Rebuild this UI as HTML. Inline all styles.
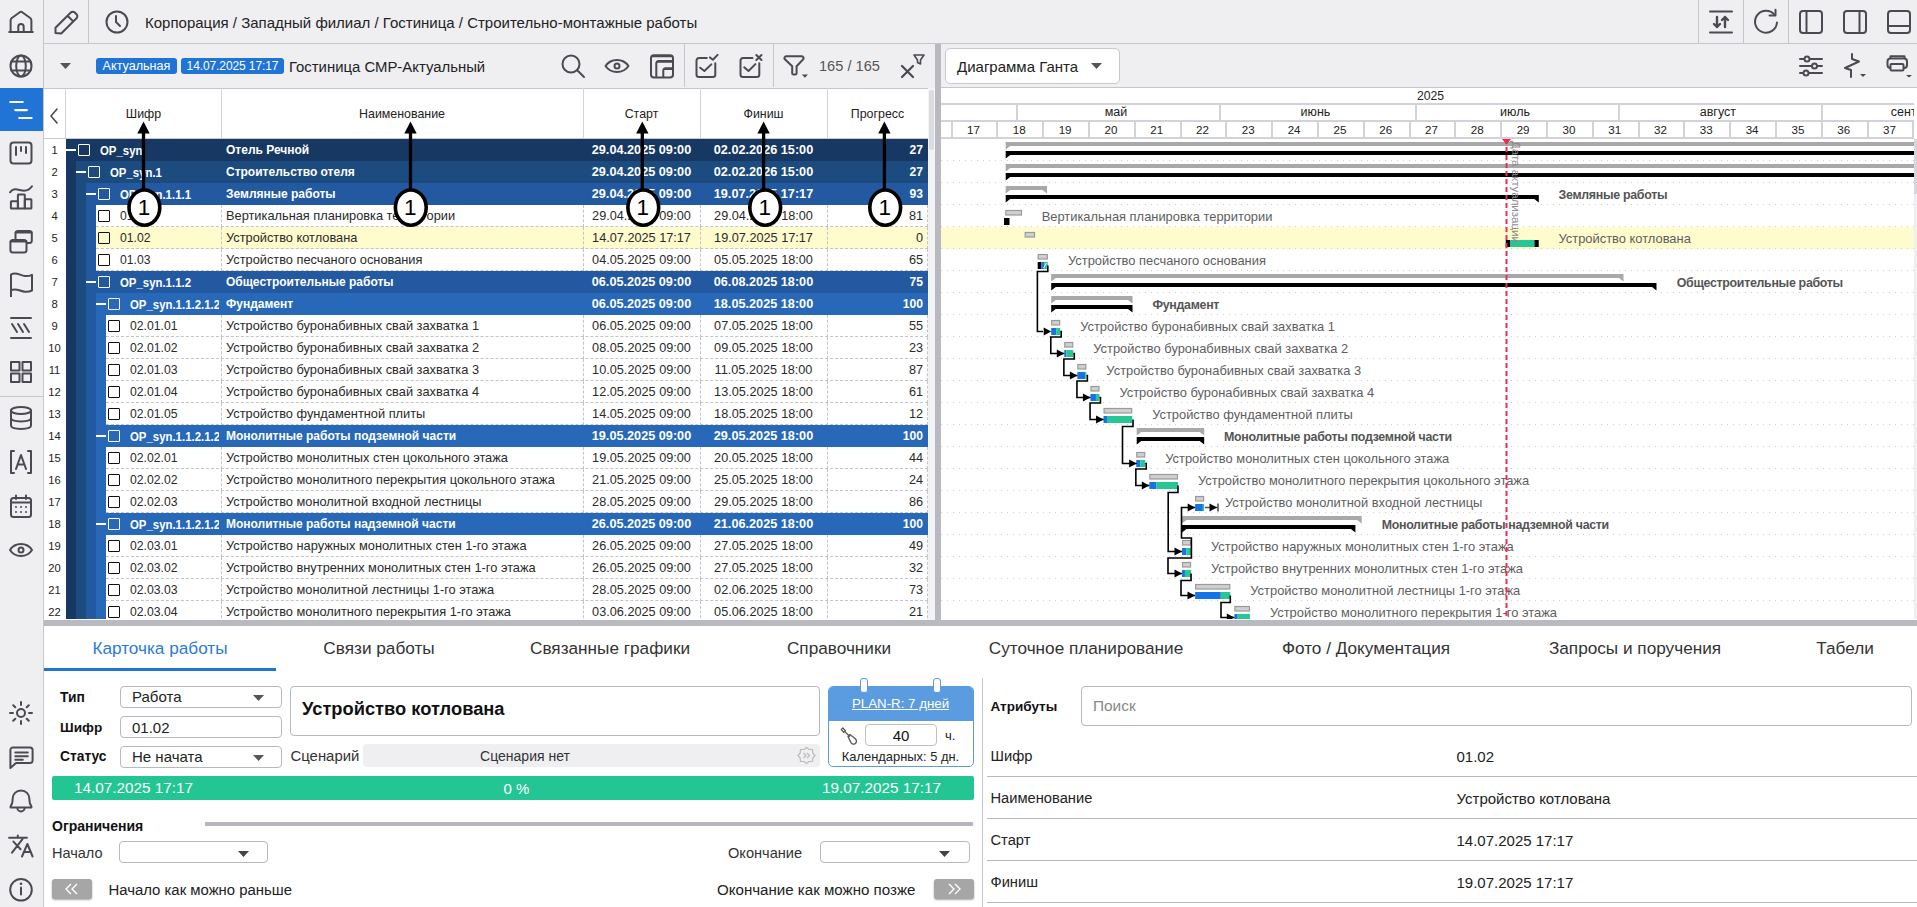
<!DOCTYPE html><html><head><meta charset="utf-8"><style>
html,body{margin:0;padding:0;width:1917px;height:907px;overflow:hidden;background:#fff;font-family:"Liberation Sans", sans-serif;}
div,svg{box-sizing:border-box;}
</style></head><body><div style="position:absolute;left:0px;top:0px;width:1917px;height:88px;background:#efeff2;"></div><div style="position:absolute;left:0px;top:0px;width:43px;height:907px;background:#efeff2;"></div><div style="position:absolute;left:43px;top:0px;width:1px;height:907px;background:#c6c6cc;"></div><div style="position:absolute;left:44px;top:43px;width:1873px;height:1px;background:#c6c6cc;"></div><div style="position:absolute;left:44px;top:88px;width:1873px;height:1px;background:#c6c6cc;"></div><div style="position:absolute;left:88px;top:0px;width:1px;height:43px;background:#c6c6cc;"></div><div style="position:absolute;left:1698px;top:0px;width:1px;height:43px;background:#c6c6cc;"></div><div style="position:absolute;left:1743px;top:0px;width:1px;height:43px;background:#c6c6cc;"></div><div style="position:absolute;left:1788px;top:0px;width:1px;height:43px;background:#c6c6cc;"></div><div style="position:absolute;left:684px;top:44px;width:1px;height:43px;background:#c6c6cc;"></div><div style="position:absolute;left:773px;top:44px;width:1px;height:43px;background:#c6c6cc;"></div><div style="position:absolute;left:0px;top:88px;width:43px;height:43px;background:#1f74d6;"></div><svg style="position:absolute;left:8px;top:9px;" width="26" height="26" viewBox="0 0 26 26"><g fill="none" stroke="#4a4a52" stroke-width="2" stroke-linecap="round" stroke-linejoin="round" stroke-width="2"><path d="M1.2 22.9 H24.8 M2.6 22.9 V11.5 Q2.6 10 3.8 9 L11.8 3.2 Q13 2.4 14.2 3.2 L22.2 9 Q23.4 10 23.4 11.5 V22.9 M10.3 22.9 V17.8 a2.7 2.7 0 0 1 5.4 0 V22.9"/></g></svg><svg style="position:absolute;left:8.0px;top:53.0px;" width="26" height="26" viewBox="0 0 26 26"><g fill="none" stroke="#4a4a52" stroke-width="2" stroke-linecap="round" stroke-linejoin="round"><circle cx="13" cy="13" r="10.5"/><ellipse cx="13" cy="13" rx="4.8" ry="10.5"/><path d="M3.3 8.5H22.7M3.3 17.5H22.7"/></g></svg><svg style="position:absolute;left:8.0px;top:97.0px;" width="26" height="26" viewBox="0 0 26 26"><g fill="none" stroke="#fff" stroke-width="2.2" stroke-linecap="round"><path d="M2.3 5H14.7M7.2 13.1H18.9M11.3 21H23.6"/></g></svg><svg style="position:absolute;left:8.0px;top:140.0px;" width="26" height="26" viewBox="0 0 26 26"><g fill="none" stroke="#4a4a52" stroke-width="2" stroke-linecap="round" stroke-linejoin="round"><rect x="2.5" y="2.5" width="21" height="21" rx="3"/><path d="M8 7V15M13 7V11M18 7V13"/></g></svg><svg style="position:absolute;left:8px;top:184px;" width="26" height="26" viewBox="0 0 26 26"><g fill="none" stroke="#4a4a52" stroke-width="2" stroke-linecap="round" stroke-linejoin="round" stroke-width="2"><path d="M2 8.3 C5.5 3.5 9.5 5.5 13 6.3 C17 7.2 21 6.5 24 2.2"/><rect x="2.9" y="17.3" width="7" height="7.1" rx="0.5"/><rect x="9.9" y="10.6" width="6.9" height="13.8" rx="0.5"/><rect x="16.8" y="15.2" width="6.6" height="9.2" rx="0.5"/></g></svg><svg style="position:absolute;left:8px;top:228px;" width="26" height="26" viewBox="0 0 26 26"><g fill="none" stroke="#4a4a52" stroke-width="2" stroke-linecap="round" stroke-linejoin="round" stroke-width="2"><rect x="7.5" y="3" width="16.3" height="12" rx="2.5"/><path d="M8 4.2H23.3" stroke-width="2.4"/><rect x="2.4" y="12" width="16.1" height="12.5" rx="2.5" fill="#efeff2"/><path d="M3 13.2H18" stroke-width="2.4"/></g></svg><svg style="position:absolute;left:8px;top:271px;" width="26" height="26" viewBox="0 0 26 26"><g fill="none" stroke="#4a4a52" stroke-width="2" stroke-linecap="round" stroke-linejoin="round" stroke-width="2"><path d="M3 25.5 V3.5 C8 0.5 12 4.5 17 5 C20 5.3 22.5 4.5 24 3.8 V19.5 C22.5 20.3 20 21 17 20.8 C12 20.3 8 16.5 3 19.2"/></g></svg><svg style="position:absolute;left:8.0px;top:315.0px;" width="26" height="26" viewBox="0 0 26 26"><g fill="none" stroke="#4a4a52" stroke-width="2" stroke-linecap="round" stroke-linejoin="round"><path d="M3 3H23M3 23H23M4 9L9 17M10 9L15 17M16 9L21 17"/></g></svg><svg style="position:absolute;left:8.0px;top:359.0px;" width="26" height="26" viewBox="0 0 26 26"><g fill="none" stroke="#4a4a52" stroke-width="2" stroke-linecap="round" stroke-linejoin="round"><rect x="3" y="3" width="8.5" height="8.5"/><rect x="14.5" y="3" width="8.5" height="8.5"/><rect x="3" y="14.5" width="8.5" height="8.5"/><rect x="14.5" y="14.5" width="8.5" height="8.5"/></g></svg><div style="position:absolute;left:0px;top:396px;width:43px;height:1px;background:#c6c6cc;"></div><svg style="position:absolute;left:8.0px;top:405.0px;" width="26" height="26" viewBox="0 0 26 26"><g fill="none" stroke="#4a4a52" stroke-width="2" stroke-linecap="round" stroke-linejoin="round"><ellipse cx="13" cy="5.5" rx="10" ry="3.5"/><path d="M3 5.5V20.5 C3 25 23 25 23 20.5V5.5M3 13 C3 17.5 23 17.5 23 13"/></g></svg><svg style="position:absolute;left:8.0px;top:449.0px;" width="26" height="26" viewBox="0 0 26 26"><g fill="none" stroke="#4a4a52" stroke-width="2" stroke-linecap="round" stroke-linejoin="round"><path d="M6 2H3V24H6M20 2H23V24H20M8 20L13 6L18 20M9.5 15.5H16.5"/></g></svg><svg style="position:absolute;left:8.0px;top:493.0px;" width="26" height="26" viewBox="0 0 26 26"><g fill="none" stroke="#4a4a52" stroke-width="2" stroke-linecap="round" stroke-linejoin="round"><rect x="3" y="5" width="20" height="19" rx="2.5"/><path d="M3 9.5H23M8 2.5V6M18 2.5V6"/></g><g fill="#4a4a52"><circle cx="8" cy="14" r="1"/><circle cx="13" cy="14" r="1"/><circle cx="18" cy="14" r="1"/><circle cx="8" cy="19" r="1"/><circle cx="13" cy="19" r="1"/><circle cx="18" cy="19" r="1"/></g></svg><svg style="position:absolute;left:8.0px;top:537.0px;" width="26" height="26" viewBox="0 0 26 26"><g fill="none" stroke="#4a4a52" stroke-width="2" stroke-linecap="round" stroke-linejoin="round"><path d="M2 13 C7 5 19 5 24 13 C19 21 7 21 2 13Z"/><circle cx="13" cy="13" r="2.5"/></g></svg><svg style="position:absolute;left:8.0px;top:700.0px;" width="26" height="26" viewBox="0 0 26 26"><g fill="none" stroke="#4a4a52" stroke-width="2" stroke-linecap="round" stroke-linejoin="round"><circle cx="13" cy="13" r="4"/><path d="M13 2V5M13 21V24M2 13H5M21 13H24M5.2 5.2L7.3 7.3M18.7 18.7L20.8 20.8M5.2 20.8L7.3 18.7M18.7 7.3L20.8 5.2"/></g></svg><svg style="position:absolute;left:8px;top:744px;" width="26" height="26" viewBox="0 0 26 26"><g fill="none" stroke="#4a4a52" stroke-width="2" stroke-linecap="round" stroke-linejoin="round" stroke-width="2"><path d="M2.4 6 a2.6 2.6 0 0 1 2.6 -2.6 H22 a2.6 2.6 0 0 1 2.6 2.6 V16.5 a2.6 2.6 0 0 1 -2.6 2.6 H8 L2.4 24Z"/><path d="M7.3 8.6H19.8M7.3 12.2H19.8M7.3 15.8H14.8"/></g></svg><svg style="position:absolute;left:8px;top:788px;" width="26" height="26" viewBox="0 0 26 26"><g fill="none" stroke="#4a4a52" stroke-width="2" stroke-linecap="round" stroke-linejoin="round" stroke-width="2"><path d="M3.2 19.5 Q2.2 19.5 2.6 18.3 Q4.6 15.5 4.6 12 V11 C4.6 5.8 8.2 2.6 13 2.6 C17.8 2.6 21.4 5.8 21.4 11 V12 Q21.4 15.5 23.4 18.3 Q23.8 19.5 22.8 19.5 Z M9.3 19.8 a3.7 3.7 0 0 0 7.4 0"/></g></svg><svg style="position:absolute;left:7px;top:831px;" width="28" height="28" viewBox="0 0 28 28"><g fill="none" stroke="#4a4a52" stroke-width="2" stroke-linecap="round" stroke-linejoin="round" stroke-width="2"><path d="M2.1 6.8H19.9M10.8 4.4V6.8M6.4 10.6L13.6 18.3M15.5 8.2L5 21.6M15 25.5L20.4 13L25.6 25.5M16.8 21H24"/></g></svg><svg style="position:absolute;left:8.0px;top:876.0px;" width="26" height="26" viewBox="0 0 26 26"><g fill="none" stroke="#4a4a52" stroke-width="2" stroke-linecap="round" stroke-linejoin="round"><circle cx="13" cy="13.8" r="10.8"/><path d="M13 11.5V18.5"/></g><circle cx="13" cy="7.8" r="1.3" fill="#4a4a52"/></svg><svg style="position:absolute;left:53.0px;top:9.0px;" width="26" height="26" viewBox="0 0 26 26"><g fill="none" stroke="#4a4a52" stroke-width="2" stroke-linecap="round" stroke-linejoin="round" stroke-width="2.1"><path d="M2.5 24 L2.5 18.8 L17.8 3.5 a2.8 2.8 0 0 1 4 0 L23.5 5.2 a2.8 2.8 0 0 1 0 4 L8.2 24.5Z M14.8 7 L20.2 12.4"/></g></svg><svg style="position:absolute;left:104.0px;top:9.0px;" width="26" height="26" viewBox="0 0 26 26"><g fill="none" stroke="#4a4a52" stroke-width="2" stroke-linecap="round" stroke-linejoin="round"><circle cx="13" cy="13" r="10.5"/><path d="M12 7V13L16 17"/></g></svg><div style="position:absolute;left:145px;top:11.5px;height:21px;line-height:21px;font-size:15px;color:#222;white-space:nowrap;">Корпорация / Западный филиал / Гостиница / Строительно-монтажные работы</div><svg style="position:absolute;left:1708.0px;top:9.0px;" width="26" height="26" viewBox="0 0 26 26"><g fill="none" stroke="#4a4a52" stroke-width="2" stroke-linecap="round" stroke-linejoin="round"><path d="M2 2.5H24M2 23.5H24"/><path d="M9 8V18M6 15L9 18L12 15M17 18V8M14 11L17 8L20 11" stroke-width="2.4"/></g></svg><svg style="position:absolute;left:1752px;top:8px;" width="28" height="28" viewBox="0 0 28 28"><g fill="none" stroke="#4a4a52" stroke-width="2" stroke-linecap="round" stroke-linejoin="round" stroke-width="2.1"><path d="M25 14.5 A11 11 0 1 1 22.2 6.3"/><path d="M23.5 1.8 V7.6 H17.5"/></g></svg><svg style="position:absolute;left:1798.0px;top:9.0px;" width="26" height="26" viewBox="0 0 26 26"><g fill="none" stroke="#4a4a52" stroke-width="2" stroke-linecap="round" stroke-linejoin="round"><rect x="2" y="2" width="22" height="22" rx="3"/><path d="M8.5 2V24"/></g></svg><svg style="position:absolute;left:1842.0px;top:9.0px;" width="26" height="26" viewBox="0 0 26 26"><g fill="none" stroke="#4a4a52" stroke-width="2" stroke-linecap="round" stroke-linejoin="round"><rect x="2" y="2" width="22" height="22" rx="3"/><path d="M17.5 2V24"/></g></svg><svg style="position:absolute;left:1886.0px;top:9.0px;" width="26" height="26" viewBox="0 0 26 26"><g fill="none" stroke="#4a4a52" stroke-width="2" stroke-linecap="round" stroke-linejoin="round"><rect x="2" y="2" width="22" height="22" rx="3"/><path d="M2 17H24"/></g></svg><svg style="position:absolute;left:60px;top:63px;" width="12" height="7" viewBox="0 0 12 7"><path d="M0 0H11L5.5 6Z" fill="#555"/></svg><div style="position:absolute;left:96px;top:58px;width:81px;height:16px;border-radius:3px;background:#1f74d6;color:#fff;font-size:12.6px;line-height:16px;text-align:center;">Актуальная</div><div style="position:absolute;left:181px;top:58px;width:103px;height:16px;border-radius:3px;background:#1f74d6;color:#fff;font-size:12.6px;line-height:16px;text-align:center;letter-spacing:-0.1px;font-size:12px;">14.07.2025 17:17</div><div style="position:absolute;left:289px;top:56.55px;height:20.9px;line-height:20.9px;font-size:14.9px;color:#222;white-space:nowrap;">Гостиница СМР-Актуальный</div><svg style="position:absolute;left:560.0px;top:53.0px;" width="26" height="26" viewBox="0 0 26 26"><g fill="none" stroke="#4a4a52" stroke-width="2" stroke-linecap="round" stroke-linejoin="round"><circle cx="11" cy="11" r="8.5"/><path d="M17.5 17.5L24 24"/></g></svg><svg style="position:absolute;left:604.0px;top:53.0px;" width="26" height="26" viewBox="0 0 26 26"><g fill="none" stroke="#4a4a52" stroke-width="2" stroke-linecap="round" stroke-linejoin="round"><path d="M1.5 13 C7 5 19 5 24.5 13 C19 21 7 21 1.5 13Z"/><circle cx="13" cy="13" r="2.5"/></g></svg><svg style="position:absolute;left:648.0px;top:53.0px;" width="26" height="26" viewBox="0 0 26 26"><g fill="none" stroke="#4a4a52" stroke-width="2" stroke-linecap="round" stroke-linejoin="round" stroke-width="2.1"><rect x="3" y="2.2" width="22" height="22.3" rx="3"/><path d="M8.3 24V10.5 a2.5 2.5 0 0 1 2.5 -2.5H24.5M15.3 24V17.3 a2 2 0 0 1 2 -2H24.5"/><path d="M4 3.4H24M9.5 9H24M16.5 16.2H24" stroke-width="1.6"/></g></svg><svg style="position:absolute;left:693px;top:53px;" width="26" height="26" viewBox="0 0 26 26"><g fill="none" stroke="#4a4a52" stroke-width="2" stroke-linecap="round" stroke-linejoin="round" stroke-width="2.1"><path d="M13.8 5H6 a2.5 2.5 0 0 0 -2.5 2.5V21.5 a2.5 2.5 0 0 0 2.5 2.5H19.8 a2.5 2.5 0 0 0 2.5 -2.5V10.3"/><path d="M7.2 14.7L11.4 18L18.3 11.4M17 4.4L19.9 6.8L24.6 1.9"/></g></svg><svg style="position:absolute;left:737px;top:53px;" width="26" height="26" viewBox="0 0 26 26"><g fill="none" stroke="#4a4a52" stroke-width="2" stroke-linecap="round" stroke-linejoin="round" stroke-width="2.1"><path d="M15.5 5H6 a2.5 2.5 0 0 0 -2.5 2.5V21.5 a2.5 2.5 0 0 0 2.5 2.5H19.8 a2.5 2.5 0 0 0 2.5 -2.5V10.3"/><path d="M7.2 14.3L11.5 18L18.4 11.1M19.3 2L24.5 7M24.5 2L19.3 7"/></g></svg><svg style="position:absolute;left:783px;top:53px;" width="26" height="26" viewBox="0 0 26 26"><g fill="none" stroke="#4a4a52" stroke-width="2" stroke-linecap="round" stroke-linejoin="round" stroke-width="2.1"><path d="M3.2 3.3H18.8a1.8 1.8 0 0 1 1.3 3L13.6 13.3V20.2a1.4 1.4 0 0 1 -1.4 1.4H10.6a1.4 1.4 0 0 1 -1.4 -1.4V13.3L1.9 6.3a1.8 1.8 0 0 1 1.3 -3Z"/></g><path d="M18.8 21.4H25L21.9 24.8Z" fill="#4a4a52"/></svg><div style="position:absolute;left:819px;top:55.7px;height:20.6px;line-height:20.6px;font-size:14.6px;color:#555;white-space:nowrap;">165 / 165</div><svg style="position:absolute;left:899.0px;top:53.0px;" width="26" height="26" viewBox="0 0 26 26"><g fill="none" stroke="#4a4a52" stroke-width="2" stroke-linecap="round" stroke-linejoin="round"><path d="M3 13L14 24M14 13L3 24" stroke-width="2.2"/><path d="M15 2H25L21.5 7V11L18.5 9.5V7Z" stroke-width="1.6"/></g></svg><div style="position:absolute;left:945px;top:48px;width:175px;height:36px;border:1px solid #c8c8d0;border-radius:5px;background:#fff;"></div><div style="position:absolute;left:957px;top:55.5px;height:21px;line-height:21px;font-size:15px;color:#222;white-space:nowrap;">Диаграмма Ганта</div><svg style="position:absolute;left:1091px;top:63px;" width="12" height="7" viewBox="0 0 12 7"><path d="M0 0H11L5.5 6Z" fill="#555"/></svg><svg style="position:absolute;left:1798.0px;top:53.0px;" width="26" height="26" viewBox="0 0 26 26"><g fill="none" stroke="#4a4a52" stroke-width="2" stroke-linecap="round" stroke-linejoin="round"><path d="M2 6H24M2 13H24M2 20H24"/><circle cx="9" cy="6" r="2.5" fill="#efeff2"/><circle cx="16.5" cy="13" r="2.5" fill="#efeff2"/><circle cx="8" cy="20" r="2.5" fill="#efeff2"/></g></svg><svg style="position:absolute;left:1842.0px;top:53.0px;" width="26" height="26" viewBox="0 0 26 26"><g fill="none" stroke="#4a4a52" stroke-width="2" stroke-linecap="round" stroke-linejoin="round"><path d="M10 1V6L17 8.5L3 15L9 17V24"/></g><path d="M18 21H24L21 24Z" fill="#4a4a52"/></svg><svg style="position:absolute;left:1885px;top:52px;" width="28" height="28" viewBox="0 0 28 28"><g fill="none" stroke="#4a4a52" stroke-width="2" stroke-linecap="round" stroke-linejoin="round" stroke-width="2.1"><path d="M5.5 6V4.2H19.5V6"/><rect x="2.5" y="6.5" width="19.5" height="9.5" rx="3"/><rect x="5.5" y="12" width="13" height="6.5" rx="1" fill="#efeff2"/></g><path d="M21 23H27L24 25.5Z" fill="#4a4a52"/></svg><div style="position:absolute;left:44px;top:89px;width:884px;height:50px;background:#fff;"></div><div style="position:absolute;left:44px;top:138px;width:884px;height:1px;background:#c8c8ce;"></div><div style="position:absolute;left:65px;top:88px;width:1px;height:50px;background:#d4d4da;"></div><div style="position:absolute;left:221px;top:88px;width:1px;height:50px;background:#d4d4da;"></div><div style="position:absolute;left:583px;top:88px;width:1px;height:50px;background:#d4d4da;"></div><div style="position:absolute;left:700px;top:88px;width:1px;height:50px;background:#d4d4da;"></div><div style="position:absolute;left:827px;top:88px;width:1px;height:50px;background:#d4d4da;"></div><svg style="position:absolute;left:49px;top:108px;" width="10" height="16" viewBox="0 0 10 16"><path d="M8 1L2 8L8 15" fill="none" stroke="#4a4a52" stroke-width="1.6" stroke-linecap="round" stroke-linejoin="round"/></svg><div style="position:absolute;left:-56.5px;top:105.0px;width:400px;height:18.4px;line-height:18.4px;text-align:center;font-size:12.4px;color:#222;white-space:nowrap;">Шифр</div><div style="position:absolute;left:202.0px;top:105.0px;width:400px;height:18.4px;line-height:18.4px;text-align:center;font-size:12.4px;color:#222;white-space:nowrap;">Наименование</div><div style="position:absolute;left:441.5px;top:105.0px;width:400px;height:18.4px;line-height:18.4px;text-align:center;font-size:12.4px;color:#222;white-space:nowrap;">Старт</div><div style="position:absolute;left:563.5px;top:105.0px;width:400px;height:18.4px;line-height:18.4px;text-align:center;font-size:12.4px;color:#222;white-space:nowrap;">Финиш</div><div style="position:absolute;left:677.5px;top:105.0px;width:400px;height:18.4px;line-height:18.4px;text-align:center;font-size:12.4px;color:#222;white-space:nowrap;">Прогресс</div><div style="position:absolute;left:44px;top:139px;width:884px;height:482px;background:#fff;"></div><div style="position:absolute;left:928px;top:88px;width:7px;height:533px;background:#f4f4f6;"></div><div style="position:absolute;left:929px;top:90px;width:5px;height:60px;background:#dcdce0;border-radius:3px;"></div><div style="position:absolute;left:935px;top:44px;width:6px;height:577px;background:#b9b9c0;"></div><div style="position:absolute;left:66px;top:139px;width:862px;height:22px;background:#173863;"></div><div style="position:absolute;left:66px;top:149px;width:10px;height:2px;background:#fff;"></div><div style="position:absolute;left:78px;top:144px;width:12px;height:12px;border:1.5px solid #fff;border-radius:1px;"></div><div style="position:absolute;left:100px;top:139.5px;width:119px;height:22px;overflow:hidden;line-height:22px;font-size:12.4px;font-weight:bold;color:#fff;white-space:nowrap;"><span style="display:inline-block;transform:scaleX(0.92);transform-origin:0 50%;">OP_syn</span></div><div style="position:absolute;left:226px;top:141.0px;height:18px;line-height:18px;font-size:12px;color:#fff;font-weight:bold;white-space:nowrap;">Отель Речной</div><div style="position:absolute;left:441.5px;top:140.65px;width:400px;height:18.7px;line-height:18.7px;text-align:center;font-size:12.7px;color:#fff;font-weight:bold;white-space:nowrap;">29.04.2025 09:00</div><div style="position:absolute;left:563.5px;top:140.65px;width:400px;height:18.7px;line-height:18.7px;text-align:center;font-size:12.7px;color:#fff;font-weight:bold;white-space:nowrap;">02.02.2026 15:00</div><div style="position:absolute;left:623px;top:140.95px;width:300px;height:18.1px;line-height:18.1px;text-align:right;font-size:12.1px;color:#fff;font-weight:bold;white-space:nowrap;">27</div><div style="position:absolute;left:39.5px;top:142.20000000000002px;width:30px;height:17.2px;line-height:17.2px;text-align:center;font-size:11.2px;color:#222;white-space:nowrap;">1</div><div style="position:absolute;left:66px;top:161px;width:10px;height:22px;background:#173863;"></div><div style="position:absolute;left:76px;top:161px;width:852px;height:22px;background:#1c4b80;"></div><div style="position:absolute;left:76px;top:171px;width:10px;height:2px;background:#fff;"></div><div style="position:absolute;left:88px;top:166px;width:12px;height:12px;border:1.5px solid #fff;border-radius:1px;"></div><div style="position:absolute;left:110px;top:161.5px;width:109px;height:22px;overflow:hidden;line-height:22px;font-size:12.4px;font-weight:bold;color:#fff;white-space:nowrap;"><span style="display:inline-block;transform:scaleX(0.92);transform-origin:0 50%;">OP_syn.1</span></div><div style="position:absolute;left:226px;top:163.0px;height:18px;line-height:18px;font-size:12px;color:#fff;font-weight:bold;white-space:nowrap;">Строительство отеля</div><div style="position:absolute;left:441.5px;top:162.65px;width:400px;height:18.7px;line-height:18.7px;text-align:center;font-size:12.7px;color:#fff;font-weight:bold;white-space:nowrap;">29.04.2025 09:00</div><div style="position:absolute;left:563.5px;top:162.65px;width:400px;height:18.7px;line-height:18.7px;text-align:center;font-size:12.7px;color:#fff;font-weight:bold;white-space:nowrap;">02.02.2026 15:00</div><div style="position:absolute;left:623px;top:162.95px;width:300px;height:18.1px;line-height:18.1px;text-align:right;font-size:12.1px;color:#fff;font-weight:bold;white-space:nowrap;">27</div><div style="position:absolute;left:39.5px;top:164.20000000000002px;width:30px;height:17.2px;line-height:17.2px;text-align:center;font-size:11.2px;color:#222;white-space:nowrap;">2</div><div style="position:absolute;left:66px;top:183px;width:10px;height:22px;background:#173863;"></div><div style="position:absolute;left:76px;top:183px;width:10px;height:22px;background:#1c4b80;"></div><div style="position:absolute;left:86px;top:183px;width:842px;height:22px;background:#2259a0;"></div><div style="position:absolute;left:86px;top:193px;width:10px;height:2px;background:#fff;"></div><div style="position:absolute;left:98px;top:188px;width:12px;height:12px;border:1.5px solid #fff;border-radius:1px;"></div><div style="position:absolute;left:120px;top:183.5px;width:99px;height:22px;overflow:hidden;line-height:22px;font-size:12.4px;font-weight:bold;color:#fff;white-space:nowrap;"><span style="display:inline-block;transform:scaleX(0.92);transform-origin:0 50%;">OP_syn.1.1.1</span></div><div style="position:absolute;left:226px;top:185.0px;height:18px;line-height:18px;font-size:12px;color:#fff;font-weight:bold;white-space:nowrap;">Земляные работы</div><div style="position:absolute;left:441.5px;top:184.65px;width:400px;height:18.7px;line-height:18.7px;text-align:center;font-size:12.7px;color:#fff;font-weight:bold;white-space:nowrap;">29.04.2025 09:00</div><div style="position:absolute;left:563.5px;top:184.65px;width:400px;height:18.7px;line-height:18.7px;text-align:center;font-size:12.7px;color:#fff;font-weight:bold;white-space:nowrap;">19.07.2025 17:17</div><div style="position:absolute;left:623px;top:184.95px;width:300px;height:18.1px;line-height:18.1px;text-align:right;font-size:12.1px;color:#fff;font-weight:bold;white-space:nowrap;">93</div><div style="position:absolute;left:39.5px;top:186.20000000000002px;width:30px;height:17.2px;line-height:17.2px;text-align:center;font-size:11.2px;color:#222;white-space:nowrap;">3</div><div style="position:absolute;left:66px;top:205px;width:10px;height:22px;background:#173863;"></div><div style="position:absolute;left:76px;top:205px;width:10px;height:22px;background:#1c4b80;"></div><div style="position:absolute;left:86px;top:205px;width:10px;height:22px;background:#2259a0;"></div><div style="position:absolute;left:96px;top:205px;width:832px;height:22px;background:#fff;border-bottom:1px dashed #c4c4c8;"></div><div style="position:absolute;left:221px;top:205px;width:1px;height:22px;border-left:1px dashed #c4c4c8;"></div><div style="position:absolute;left:583px;top:205px;width:1px;height:22px;border-left:1px dashed #c4c4c8;"></div><div style="position:absolute;left:700px;top:205px;width:1px;height:22px;border-left:1px dashed #c4c4c8;"></div><div style="position:absolute;left:827px;top:205px;width:1px;height:22px;border-left:1px dashed #c4c4c8;"></div><div style="position:absolute;left:927px;top:205px;width:1px;height:22px;border-left:1px dashed #c4c4c8;"></div><div style="position:absolute;left:98px;top:210px;width:12px;height:12px;border:1.5px solid #111;border-radius:1px;"></div><div style="position:absolute;left:120px;top:206.9px;height:18.2px;line-height:18.2px;font-size:12.2px;color:#2a2a2a;white-space:nowrap;">01.01</div><div style="position:absolute;left:226px;top:206.6px;height:18.8px;line-height:18.8px;font-size:12.8px;color:#2a2a2a;white-space:nowrap;">Вертикальная планировка территории</div><div style="position:absolute;left:441.5px;top:206.65px;width:400px;height:18.7px;line-height:18.7px;text-align:center;font-size:12.7px;color:#2a2a2a;white-space:nowrap;">29.04.2025 09:00</div><div style="position:absolute;left:563.5px;top:206.65px;width:400px;height:18.7px;line-height:18.7px;text-align:center;font-size:12.7px;color:#2a2a2a;white-space:nowrap;">29.04.2025 18:00</div><div style="position:absolute;left:623px;top:206.65px;width:300px;height:18.7px;line-height:18.7px;text-align:right;font-size:12.7px;color:#2a2a2a;white-space:nowrap;">81</div><div style="position:absolute;left:39.5px;top:208.20000000000002px;width:30px;height:17.2px;line-height:17.2px;text-align:center;font-size:11.2px;color:#222;white-space:nowrap;">4</div><div style="position:absolute;left:66px;top:227px;width:10px;height:22px;background:#173863;"></div><div style="position:absolute;left:76px;top:227px;width:10px;height:22px;background:#1c4b80;"></div><div style="position:absolute;left:86px;top:227px;width:10px;height:22px;background:#2259a0;"></div><div style="position:absolute;left:96px;top:227px;width:832px;height:22px;background:#fefbcc;border-bottom:1px dashed #c4c4c8;"></div><div style="position:absolute;left:221px;top:227px;width:1px;height:22px;border-left:1px dashed #c4c4c8;"></div><div style="position:absolute;left:583px;top:227px;width:1px;height:22px;border-left:1px dashed #c4c4c8;"></div><div style="position:absolute;left:700px;top:227px;width:1px;height:22px;border-left:1px dashed #c4c4c8;"></div><div style="position:absolute;left:827px;top:227px;width:1px;height:22px;border-left:1px dashed #c4c4c8;"></div><div style="position:absolute;left:927px;top:227px;width:1px;height:22px;border-left:1px dashed #c4c4c8;"></div><div style="position:absolute;left:98px;top:232px;width:12px;height:12px;border:1.5px solid #111;border-radius:1px;"></div><div style="position:absolute;left:120px;top:228.9px;height:18.2px;line-height:18.2px;font-size:12.2px;color:#2a2a2a;white-space:nowrap;">01.02</div><div style="position:absolute;left:226px;top:228.6px;height:18.8px;line-height:18.8px;font-size:12.8px;color:#2a2a2a;white-space:nowrap;">Устройство котлована</div><div style="position:absolute;left:441.5px;top:228.65px;width:400px;height:18.7px;line-height:18.7px;text-align:center;font-size:12.7px;color:#2a2a2a;white-space:nowrap;">14.07.2025 17:17</div><div style="position:absolute;left:563.5px;top:228.65px;width:400px;height:18.7px;line-height:18.7px;text-align:center;font-size:12.7px;color:#2a2a2a;white-space:nowrap;">19.07.2025 17:17</div><div style="position:absolute;left:623px;top:228.65px;width:300px;height:18.7px;line-height:18.7px;text-align:right;font-size:12.7px;color:#2a2a2a;white-space:nowrap;">0</div><div style="position:absolute;left:39.5px;top:230.20000000000002px;width:30px;height:17.2px;line-height:17.2px;text-align:center;font-size:11.2px;color:#222;white-space:nowrap;">5</div><div style="position:absolute;left:66px;top:249px;width:10px;height:22px;background:#173863;"></div><div style="position:absolute;left:76px;top:249px;width:10px;height:22px;background:#1c4b80;"></div><div style="position:absolute;left:86px;top:249px;width:10px;height:22px;background:#2259a0;"></div><div style="position:absolute;left:96px;top:249px;width:832px;height:22px;background:#fff;border-bottom:1px dashed #c4c4c8;"></div><div style="position:absolute;left:221px;top:249px;width:1px;height:22px;border-left:1px dashed #c4c4c8;"></div><div style="position:absolute;left:583px;top:249px;width:1px;height:22px;border-left:1px dashed #c4c4c8;"></div><div style="position:absolute;left:700px;top:249px;width:1px;height:22px;border-left:1px dashed #c4c4c8;"></div><div style="position:absolute;left:827px;top:249px;width:1px;height:22px;border-left:1px dashed #c4c4c8;"></div><div style="position:absolute;left:927px;top:249px;width:1px;height:22px;border-left:1px dashed #c4c4c8;"></div><div style="position:absolute;left:98px;top:254px;width:12px;height:12px;border:1.5px solid #111;border-radius:1px;"></div><div style="position:absolute;left:120px;top:250.9px;height:18.2px;line-height:18.2px;font-size:12.2px;color:#2a2a2a;white-space:nowrap;">01.03</div><div style="position:absolute;left:226px;top:250.6px;height:18.8px;line-height:18.8px;font-size:12.8px;color:#2a2a2a;white-space:nowrap;">Устройство песчаного основания</div><div style="position:absolute;left:441.5px;top:250.65px;width:400px;height:18.7px;line-height:18.7px;text-align:center;font-size:12.7px;color:#2a2a2a;white-space:nowrap;">04.05.2025 09:00</div><div style="position:absolute;left:563.5px;top:250.65px;width:400px;height:18.7px;line-height:18.7px;text-align:center;font-size:12.7px;color:#2a2a2a;white-space:nowrap;">05.05.2025 18:00</div><div style="position:absolute;left:623px;top:250.65px;width:300px;height:18.7px;line-height:18.7px;text-align:right;font-size:12.7px;color:#2a2a2a;white-space:nowrap;">65</div><div style="position:absolute;left:39.5px;top:252.20000000000002px;width:30px;height:17.2px;line-height:17.2px;text-align:center;font-size:11.2px;color:#222;white-space:nowrap;">6</div><div style="position:absolute;left:66px;top:271px;width:10px;height:22px;background:#173863;"></div><div style="position:absolute;left:76px;top:271px;width:10px;height:22px;background:#1c4b80;"></div><div style="position:absolute;left:86px;top:271px;width:842px;height:22px;background:#2259a0;"></div><div style="position:absolute;left:86px;top:281px;width:10px;height:2px;background:#fff;"></div><div style="position:absolute;left:98px;top:276px;width:12px;height:12px;border:1.5px solid #fff;border-radius:1px;"></div><div style="position:absolute;left:120px;top:271.5px;width:99px;height:22px;overflow:hidden;line-height:22px;font-size:12.4px;font-weight:bold;color:#fff;white-space:nowrap;"><span style="display:inline-block;transform:scaleX(0.92);transform-origin:0 50%;">OP_syn.1.1.2</span></div><div style="position:absolute;left:226px;top:273.0px;height:18px;line-height:18px;font-size:12px;color:#fff;font-weight:bold;white-space:nowrap;">Общестроительные работы</div><div style="position:absolute;left:441.5px;top:272.65px;width:400px;height:18.7px;line-height:18.7px;text-align:center;font-size:12.7px;color:#fff;font-weight:bold;white-space:nowrap;">06.05.2025 09:00</div><div style="position:absolute;left:563.5px;top:272.65px;width:400px;height:18.7px;line-height:18.7px;text-align:center;font-size:12.7px;color:#fff;font-weight:bold;white-space:nowrap;">06.08.2025 18:00</div><div style="position:absolute;left:623px;top:272.95px;width:300px;height:18.1px;line-height:18.1px;text-align:right;font-size:12.1px;color:#fff;font-weight:bold;white-space:nowrap;">75</div><div style="position:absolute;left:39.5px;top:274.2px;width:30px;height:17.2px;line-height:17.2px;text-align:center;font-size:11.2px;color:#222;white-space:nowrap;">7</div><div style="position:absolute;left:66px;top:293px;width:10px;height:22px;background:#173863;"></div><div style="position:absolute;left:76px;top:293px;width:10px;height:22px;background:#1c4b80;"></div><div style="position:absolute;left:86px;top:293px;width:10px;height:22px;background:#2259a0;"></div><div style="position:absolute;left:96px;top:293px;width:832px;height:22px;background:#2769b8;"></div><div style="position:absolute;left:96px;top:303px;width:10px;height:2px;background:#fff;"></div><div style="position:absolute;left:108px;top:298px;width:12px;height:12px;border:1.5px solid #fff;border-radius:1px;"></div><div style="position:absolute;left:130px;top:293.5px;width:89px;height:22px;overflow:hidden;line-height:22px;font-size:12.4px;font-weight:bold;color:#fff;white-space:nowrap;"><span style="display:inline-block;transform:scaleX(0.92);transform-origin:0 50%;">OP_syn.1.1.2.1.2</span></div><div style="position:absolute;left:226px;top:295.0px;height:18px;line-height:18px;font-size:12px;color:#fff;font-weight:bold;white-space:nowrap;">Фундамент</div><div style="position:absolute;left:441.5px;top:294.65px;width:400px;height:18.7px;line-height:18.7px;text-align:center;font-size:12.7px;color:#fff;font-weight:bold;white-space:nowrap;">06.05.2025 09:00</div><div style="position:absolute;left:563.5px;top:294.65px;width:400px;height:18.7px;line-height:18.7px;text-align:center;font-size:12.7px;color:#fff;font-weight:bold;white-space:nowrap;">18.05.2025 18:00</div><div style="position:absolute;left:623px;top:294.95px;width:300px;height:18.1px;line-height:18.1px;text-align:right;font-size:12.1px;color:#fff;font-weight:bold;white-space:nowrap;">100</div><div style="position:absolute;left:39.5px;top:296.2px;width:30px;height:17.2px;line-height:17.2px;text-align:center;font-size:11.2px;color:#222;white-space:nowrap;">8</div><div style="position:absolute;left:66px;top:315px;width:10px;height:22px;background:#173863;"></div><div style="position:absolute;left:76px;top:315px;width:10px;height:22px;background:#1c4b80;"></div><div style="position:absolute;left:86px;top:315px;width:10px;height:22px;background:#2259a0;"></div><div style="position:absolute;left:96px;top:315px;width:10px;height:22px;background:#2769b8;"></div><div style="position:absolute;left:106px;top:315px;width:822px;height:22px;background:#fff;border-bottom:1px dashed #c4c4c8;"></div><div style="position:absolute;left:221px;top:315px;width:1px;height:22px;border-left:1px dashed #c4c4c8;"></div><div style="position:absolute;left:583px;top:315px;width:1px;height:22px;border-left:1px dashed #c4c4c8;"></div><div style="position:absolute;left:700px;top:315px;width:1px;height:22px;border-left:1px dashed #c4c4c8;"></div><div style="position:absolute;left:827px;top:315px;width:1px;height:22px;border-left:1px dashed #c4c4c8;"></div><div style="position:absolute;left:927px;top:315px;width:1px;height:22px;border-left:1px dashed #c4c4c8;"></div><div style="position:absolute;left:108px;top:320px;width:12px;height:12px;border:1.5px solid #111;border-radius:1px;"></div><div style="position:absolute;left:130px;top:316.9px;height:18.2px;line-height:18.2px;font-size:12.2px;color:#2a2a2a;white-space:nowrap;">02.01.01</div><div style="position:absolute;left:226px;top:316.6px;height:18.8px;line-height:18.8px;font-size:12.8px;color:#2a2a2a;white-space:nowrap;">Устройство буронабивных свай захватка 1</div><div style="position:absolute;left:441.5px;top:316.65px;width:400px;height:18.7px;line-height:18.7px;text-align:center;font-size:12.7px;color:#2a2a2a;white-space:nowrap;">06.05.2025 09:00</div><div style="position:absolute;left:563.5px;top:316.65px;width:400px;height:18.7px;line-height:18.7px;text-align:center;font-size:12.7px;color:#2a2a2a;white-space:nowrap;">07.05.2025 18:00</div><div style="position:absolute;left:623px;top:316.65px;width:300px;height:18.7px;line-height:18.7px;text-align:right;font-size:12.7px;color:#2a2a2a;white-space:nowrap;">55</div><div style="position:absolute;left:39.5px;top:318.2px;width:30px;height:17.2px;line-height:17.2px;text-align:center;font-size:11.2px;color:#222;white-space:nowrap;">9</div><div style="position:absolute;left:66px;top:337px;width:10px;height:22px;background:#173863;"></div><div style="position:absolute;left:76px;top:337px;width:10px;height:22px;background:#1c4b80;"></div><div style="position:absolute;left:86px;top:337px;width:10px;height:22px;background:#2259a0;"></div><div style="position:absolute;left:96px;top:337px;width:10px;height:22px;background:#2769b8;"></div><div style="position:absolute;left:106px;top:337px;width:822px;height:22px;background:#fff;border-bottom:1px dashed #c4c4c8;"></div><div style="position:absolute;left:221px;top:337px;width:1px;height:22px;border-left:1px dashed #c4c4c8;"></div><div style="position:absolute;left:583px;top:337px;width:1px;height:22px;border-left:1px dashed #c4c4c8;"></div><div style="position:absolute;left:700px;top:337px;width:1px;height:22px;border-left:1px dashed #c4c4c8;"></div><div style="position:absolute;left:827px;top:337px;width:1px;height:22px;border-left:1px dashed #c4c4c8;"></div><div style="position:absolute;left:927px;top:337px;width:1px;height:22px;border-left:1px dashed #c4c4c8;"></div><div style="position:absolute;left:108px;top:342px;width:12px;height:12px;border:1.5px solid #111;border-radius:1px;"></div><div style="position:absolute;left:130px;top:338.9px;height:18.2px;line-height:18.2px;font-size:12.2px;color:#2a2a2a;white-space:nowrap;">02.01.02</div><div style="position:absolute;left:226px;top:338.6px;height:18.8px;line-height:18.8px;font-size:12.8px;color:#2a2a2a;white-space:nowrap;">Устройство буронабивных свай захватка 2</div><div style="position:absolute;left:441.5px;top:338.65px;width:400px;height:18.7px;line-height:18.7px;text-align:center;font-size:12.7px;color:#2a2a2a;white-space:nowrap;">08.05.2025 09:00</div><div style="position:absolute;left:563.5px;top:338.65px;width:400px;height:18.7px;line-height:18.7px;text-align:center;font-size:12.7px;color:#2a2a2a;white-space:nowrap;">09.05.2025 18:00</div><div style="position:absolute;left:623px;top:338.65px;width:300px;height:18.7px;line-height:18.7px;text-align:right;font-size:12.7px;color:#2a2a2a;white-space:nowrap;">23</div><div style="position:absolute;left:39.5px;top:340.2px;width:30px;height:17.2px;line-height:17.2px;text-align:center;font-size:11.2px;color:#222;white-space:nowrap;">10</div><div style="position:absolute;left:66px;top:359px;width:10px;height:22px;background:#173863;"></div><div style="position:absolute;left:76px;top:359px;width:10px;height:22px;background:#1c4b80;"></div><div style="position:absolute;left:86px;top:359px;width:10px;height:22px;background:#2259a0;"></div><div style="position:absolute;left:96px;top:359px;width:10px;height:22px;background:#2769b8;"></div><div style="position:absolute;left:106px;top:359px;width:822px;height:22px;background:#fff;border-bottom:1px dashed #c4c4c8;"></div><div style="position:absolute;left:221px;top:359px;width:1px;height:22px;border-left:1px dashed #c4c4c8;"></div><div style="position:absolute;left:583px;top:359px;width:1px;height:22px;border-left:1px dashed #c4c4c8;"></div><div style="position:absolute;left:700px;top:359px;width:1px;height:22px;border-left:1px dashed #c4c4c8;"></div><div style="position:absolute;left:827px;top:359px;width:1px;height:22px;border-left:1px dashed #c4c4c8;"></div><div style="position:absolute;left:927px;top:359px;width:1px;height:22px;border-left:1px dashed #c4c4c8;"></div><div style="position:absolute;left:108px;top:364px;width:12px;height:12px;border:1.5px solid #111;border-radius:1px;"></div><div style="position:absolute;left:130px;top:360.9px;height:18.2px;line-height:18.2px;font-size:12.2px;color:#2a2a2a;white-space:nowrap;">02.01.03</div><div style="position:absolute;left:226px;top:360.6px;height:18.8px;line-height:18.8px;font-size:12.8px;color:#2a2a2a;white-space:nowrap;">Устройство буронабивных свай захватка 3</div><div style="position:absolute;left:441.5px;top:360.65px;width:400px;height:18.7px;line-height:18.7px;text-align:center;font-size:12.7px;color:#2a2a2a;white-space:nowrap;">10.05.2025 09:00</div><div style="position:absolute;left:563.5px;top:360.65px;width:400px;height:18.7px;line-height:18.7px;text-align:center;font-size:12.7px;color:#2a2a2a;white-space:nowrap;">11.05.2025 18:00</div><div style="position:absolute;left:623px;top:360.65px;width:300px;height:18.7px;line-height:18.7px;text-align:right;font-size:12.7px;color:#2a2a2a;white-space:nowrap;">87</div><div style="position:absolute;left:39.5px;top:362.2px;width:30px;height:17.2px;line-height:17.2px;text-align:center;font-size:11.2px;color:#222;white-space:nowrap;">11</div><div style="position:absolute;left:66px;top:381px;width:10px;height:22px;background:#173863;"></div><div style="position:absolute;left:76px;top:381px;width:10px;height:22px;background:#1c4b80;"></div><div style="position:absolute;left:86px;top:381px;width:10px;height:22px;background:#2259a0;"></div><div style="position:absolute;left:96px;top:381px;width:10px;height:22px;background:#2769b8;"></div><div style="position:absolute;left:106px;top:381px;width:822px;height:22px;background:#fff;border-bottom:1px dashed #c4c4c8;"></div><div style="position:absolute;left:221px;top:381px;width:1px;height:22px;border-left:1px dashed #c4c4c8;"></div><div style="position:absolute;left:583px;top:381px;width:1px;height:22px;border-left:1px dashed #c4c4c8;"></div><div style="position:absolute;left:700px;top:381px;width:1px;height:22px;border-left:1px dashed #c4c4c8;"></div><div style="position:absolute;left:827px;top:381px;width:1px;height:22px;border-left:1px dashed #c4c4c8;"></div><div style="position:absolute;left:927px;top:381px;width:1px;height:22px;border-left:1px dashed #c4c4c8;"></div><div style="position:absolute;left:108px;top:386px;width:12px;height:12px;border:1.5px solid #111;border-radius:1px;"></div><div style="position:absolute;left:130px;top:382.9px;height:18.2px;line-height:18.2px;font-size:12.2px;color:#2a2a2a;white-space:nowrap;">02.01.04</div><div style="position:absolute;left:226px;top:382.6px;height:18.8px;line-height:18.8px;font-size:12.8px;color:#2a2a2a;white-space:nowrap;">Устройство буронабивных свай захватка 4</div><div style="position:absolute;left:441.5px;top:382.65px;width:400px;height:18.7px;line-height:18.7px;text-align:center;font-size:12.7px;color:#2a2a2a;white-space:nowrap;">12.05.2025 09:00</div><div style="position:absolute;left:563.5px;top:382.65px;width:400px;height:18.7px;line-height:18.7px;text-align:center;font-size:12.7px;color:#2a2a2a;white-space:nowrap;">13.05.2025 18:00</div><div style="position:absolute;left:623px;top:382.65px;width:300px;height:18.7px;line-height:18.7px;text-align:right;font-size:12.7px;color:#2a2a2a;white-space:nowrap;">61</div><div style="position:absolute;left:39.5px;top:384.2px;width:30px;height:17.2px;line-height:17.2px;text-align:center;font-size:11.2px;color:#222;white-space:nowrap;">12</div><div style="position:absolute;left:66px;top:403px;width:10px;height:22px;background:#173863;"></div><div style="position:absolute;left:76px;top:403px;width:10px;height:22px;background:#1c4b80;"></div><div style="position:absolute;left:86px;top:403px;width:10px;height:22px;background:#2259a0;"></div><div style="position:absolute;left:96px;top:403px;width:10px;height:22px;background:#2769b8;"></div><div style="position:absolute;left:106px;top:403px;width:822px;height:22px;background:#fff;border-bottom:1px dashed #c4c4c8;"></div><div style="position:absolute;left:221px;top:403px;width:1px;height:22px;border-left:1px dashed #c4c4c8;"></div><div style="position:absolute;left:583px;top:403px;width:1px;height:22px;border-left:1px dashed #c4c4c8;"></div><div style="position:absolute;left:700px;top:403px;width:1px;height:22px;border-left:1px dashed #c4c4c8;"></div><div style="position:absolute;left:827px;top:403px;width:1px;height:22px;border-left:1px dashed #c4c4c8;"></div><div style="position:absolute;left:927px;top:403px;width:1px;height:22px;border-left:1px dashed #c4c4c8;"></div><div style="position:absolute;left:108px;top:408px;width:12px;height:12px;border:1.5px solid #111;border-radius:1px;"></div><div style="position:absolute;left:130px;top:404.9px;height:18.2px;line-height:18.2px;font-size:12.2px;color:#2a2a2a;white-space:nowrap;">02.01.05</div><div style="position:absolute;left:226px;top:404.6px;height:18.8px;line-height:18.8px;font-size:12.8px;color:#2a2a2a;white-space:nowrap;">Устройство фундаментной плиты</div><div style="position:absolute;left:441.5px;top:404.65px;width:400px;height:18.7px;line-height:18.7px;text-align:center;font-size:12.7px;color:#2a2a2a;white-space:nowrap;">14.05.2025 09:00</div><div style="position:absolute;left:563.5px;top:404.65px;width:400px;height:18.7px;line-height:18.7px;text-align:center;font-size:12.7px;color:#2a2a2a;white-space:nowrap;">18.05.2025 18:00</div><div style="position:absolute;left:623px;top:404.65px;width:300px;height:18.7px;line-height:18.7px;text-align:right;font-size:12.7px;color:#2a2a2a;white-space:nowrap;">12</div><div style="position:absolute;left:39.5px;top:406.2px;width:30px;height:17.2px;line-height:17.2px;text-align:center;font-size:11.2px;color:#222;white-space:nowrap;">13</div><div style="position:absolute;left:66px;top:425px;width:10px;height:22px;background:#173863;"></div><div style="position:absolute;left:76px;top:425px;width:10px;height:22px;background:#1c4b80;"></div><div style="position:absolute;left:86px;top:425px;width:10px;height:22px;background:#2259a0;"></div><div style="position:absolute;left:96px;top:425px;width:832px;height:22px;background:#2769b8;"></div><div style="position:absolute;left:96px;top:435px;width:10px;height:2px;background:#fff;"></div><div style="position:absolute;left:108px;top:430px;width:12px;height:12px;border:1.5px solid #fff;border-radius:1px;"></div><div style="position:absolute;left:130px;top:425.5px;width:89px;height:22px;overflow:hidden;line-height:22px;font-size:12.4px;font-weight:bold;color:#fff;white-space:nowrap;"><span style="display:inline-block;transform:scaleX(0.92);transform-origin:0 50%;">OP_syn.1.1.2.1.2</span></div><div style="position:absolute;left:226px;top:427.0px;height:18px;line-height:18px;font-size:12px;color:#fff;font-weight:bold;white-space:nowrap;">Монолитные работы подземной части</div><div style="position:absolute;left:441.5px;top:426.65px;width:400px;height:18.7px;line-height:18.7px;text-align:center;font-size:12.7px;color:#fff;font-weight:bold;white-space:nowrap;">19.05.2025 09:00</div><div style="position:absolute;left:563.5px;top:426.65px;width:400px;height:18.7px;line-height:18.7px;text-align:center;font-size:12.7px;color:#fff;font-weight:bold;white-space:nowrap;">29.05.2025 18:00</div><div style="position:absolute;left:623px;top:426.95px;width:300px;height:18.1px;line-height:18.1px;text-align:right;font-size:12.1px;color:#fff;font-weight:bold;white-space:nowrap;">100</div><div style="position:absolute;left:39.5px;top:428.2px;width:30px;height:17.2px;line-height:17.2px;text-align:center;font-size:11.2px;color:#222;white-space:nowrap;">14</div><div style="position:absolute;left:66px;top:447px;width:10px;height:22px;background:#173863;"></div><div style="position:absolute;left:76px;top:447px;width:10px;height:22px;background:#1c4b80;"></div><div style="position:absolute;left:86px;top:447px;width:10px;height:22px;background:#2259a0;"></div><div style="position:absolute;left:96px;top:447px;width:10px;height:22px;background:#2769b8;"></div><div style="position:absolute;left:106px;top:447px;width:822px;height:22px;background:#fff;border-bottom:1px dashed #c4c4c8;"></div><div style="position:absolute;left:221px;top:447px;width:1px;height:22px;border-left:1px dashed #c4c4c8;"></div><div style="position:absolute;left:583px;top:447px;width:1px;height:22px;border-left:1px dashed #c4c4c8;"></div><div style="position:absolute;left:700px;top:447px;width:1px;height:22px;border-left:1px dashed #c4c4c8;"></div><div style="position:absolute;left:827px;top:447px;width:1px;height:22px;border-left:1px dashed #c4c4c8;"></div><div style="position:absolute;left:927px;top:447px;width:1px;height:22px;border-left:1px dashed #c4c4c8;"></div><div style="position:absolute;left:108px;top:452px;width:12px;height:12px;border:1.5px solid #111;border-radius:1px;"></div><div style="position:absolute;left:130px;top:448.9px;height:18.2px;line-height:18.2px;font-size:12.2px;color:#2a2a2a;white-space:nowrap;">02.02.01</div><div style="position:absolute;left:226px;top:448.6px;height:18.8px;line-height:18.8px;font-size:12.8px;color:#2a2a2a;white-space:nowrap;">Устройство монолитных стен цокольного этажа</div><div style="position:absolute;left:441.5px;top:448.65px;width:400px;height:18.7px;line-height:18.7px;text-align:center;font-size:12.7px;color:#2a2a2a;white-space:nowrap;">19.05.2025 09:00</div><div style="position:absolute;left:563.5px;top:448.65px;width:400px;height:18.7px;line-height:18.7px;text-align:center;font-size:12.7px;color:#2a2a2a;white-space:nowrap;">20.05.2025 18:00</div><div style="position:absolute;left:623px;top:448.65px;width:300px;height:18.7px;line-height:18.7px;text-align:right;font-size:12.7px;color:#2a2a2a;white-space:nowrap;">44</div><div style="position:absolute;left:39.5px;top:450.2px;width:30px;height:17.2px;line-height:17.2px;text-align:center;font-size:11.2px;color:#222;white-space:nowrap;">15</div><div style="position:absolute;left:66px;top:469px;width:10px;height:22px;background:#173863;"></div><div style="position:absolute;left:76px;top:469px;width:10px;height:22px;background:#1c4b80;"></div><div style="position:absolute;left:86px;top:469px;width:10px;height:22px;background:#2259a0;"></div><div style="position:absolute;left:96px;top:469px;width:10px;height:22px;background:#2769b8;"></div><div style="position:absolute;left:106px;top:469px;width:822px;height:22px;background:#fff;border-bottom:1px dashed #c4c4c8;"></div><div style="position:absolute;left:221px;top:469px;width:1px;height:22px;border-left:1px dashed #c4c4c8;"></div><div style="position:absolute;left:583px;top:469px;width:1px;height:22px;border-left:1px dashed #c4c4c8;"></div><div style="position:absolute;left:700px;top:469px;width:1px;height:22px;border-left:1px dashed #c4c4c8;"></div><div style="position:absolute;left:827px;top:469px;width:1px;height:22px;border-left:1px dashed #c4c4c8;"></div><div style="position:absolute;left:927px;top:469px;width:1px;height:22px;border-left:1px dashed #c4c4c8;"></div><div style="position:absolute;left:108px;top:474px;width:12px;height:12px;border:1.5px solid #111;border-radius:1px;"></div><div style="position:absolute;left:130px;top:470.9px;height:18.2px;line-height:18.2px;font-size:12.2px;color:#2a2a2a;white-space:nowrap;">02.02.02</div><div style="position:absolute;left:226px;top:470.6px;height:18.8px;line-height:18.8px;font-size:12.8px;color:#2a2a2a;white-space:nowrap;">Устройство монолитного перекрытия цокольного этажа</div><div style="position:absolute;left:441.5px;top:470.65px;width:400px;height:18.7px;line-height:18.7px;text-align:center;font-size:12.7px;color:#2a2a2a;white-space:nowrap;">21.05.2025 09:00</div><div style="position:absolute;left:563.5px;top:470.65px;width:400px;height:18.7px;line-height:18.7px;text-align:center;font-size:12.7px;color:#2a2a2a;white-space:nowrap;">25.05.2025 18:00</div><div style="position:absolute;left:623px;top:470.65px;width:300px;height:18.7px;line-height:18.7px;text-align:right;font-size:12.7px;color:#2a2a2a;white-space:nowrap;">24</div><div style="position:absolute;left:39.5px;top:472.2px;width:30px;height:17.2px;line-height:17.2px;text-align:center;font-size:11.2px;color:#222;white-space:nowrap;">16</div><div style="position:absolute;left:66px;top:491px;width:10px;height:22px;background:#173863;"></div><div style="position:absolute;left:76px;top:491px;width:10px;height:22px;background:#1c4b80;"></div><div style="position:absolute;left:86px;top:491px;width:10px;height:22px;background:#2259a0;"></div><div style="position:absolute;left:96px;top:491px;width:10px;height:22px;background:#2769b8;"></div><div style="position:absolute;left:106px;top:491px;width:822px;height:22px;background:#fff;border-bottom:1px dashed #c4c4c8;"></div><div style="position:absolute;left:221px;top:491px;width:1px;height:22px;border-left:1px dashed #c4c4c8;"></div><div style="position:absolute;left:583px;top:491px;width:1px;height:22px;border-left:1px dashed #c4c4c8;"></div><div style="position:absolute;left:700px;top:491px;width:1px;height:22px;border-left:1px dashed #c4c4c8;"></div><div style="position:absolute;left:827px;top:491px;width:1px;height:22px;border-left:1px dashed #c4c4c8;"></div><div style="position:absolute;left:927px;top:491px;width:1px;height:22px;border-left:1px dashed #c4c4c8;"></div><div style="position:absolute;left:108px;top:496px;width:12px;height:12px;border:1.5px solid #111;border-radius:1px;"></div><div style="position:absolute;left:130px;top:492.9px;height:18.2px;line-height:18.2px;font-size:12.2px;color:#2a2a2a;white-space:nowrap;">02.02.03</div><div style="position:absolute;left:226px;top:492.6px;height:18.8px;line-height:18.8px;font-size:12.8px;color:#2a2a2a;white-space:nowrap;">Устройство монолитной входной лестницы</div><div style="position:absolute;left:441.5px;top:492.65px;width:400px;height:18.7px;line-height:18.7px;text-align:center;font-size:12.7px;color:#2a2a2a;white-space:nowrap;">28.05.2025 09:00</div><div style="position:absolute;left:563.5px;top:492.65px;width:400px;height:18.7px;line-height:18.7px;text-align:center;font-size:12.7px;color:#2a2a2a;white-space:nowrap;">29.05.2025 18:00</div><div style="position:absolute;left:623px;top:492.65px;width:300px;height:18.7px;line-height:18.7px;text-align:right;font-size:12.7px;color:#2a2a2a;white-space:nowrap;">86</div><div style="position:absolute;left:39.5px;top:494.2px;width:30px;height:17.2px;line-height:17.2px;text-align:center;font-size:11.2px;color:#222;white-space:nowrap;">17</div><div style="position:absolute;left:66px;top:513px;width:10px;height:22px;background:#173863;"></div><div style="position:absolute;left:76px;top:513px;width:10px;height:22px;background:#1c4b80;"></div><div style="position:absolute;left:86px;top:513px;width:10px;height:22px;background:#2259a0;"></div><div style="position:absolute;left:96px;top:513px;width:832px;height:22px;background:#2769b8;"></div><div style="position:absolute;left:96px;top:523px;width:10px;height:2px;background:#fff;"></div><div style="position:absolute;left:108px;top:518px;width:12px;height:12px;border:1.5px solid #fff;border-radius:1px;"></div><div style="position:absolute;left:130px;top:513.5px;width:89px;height:22px;overflow:hidden;line-height:22px;font-size:12.4px;font-weight:bold;color:#fff;white-space:nowrap;"><span style="display:inline-block;transform:scaleX(0.92);transform-origin:0 50%;">OP_syn.1.1.2.1.2</span></div><div style="position:absolute;left:226px;top:515.0px;height:18px;line-height:18px;font-size:12px;color:#fff;font-weight:bold;white-space:nowrap;">Монолитные работы надземной части</div><div style="position:absolute;left:441.5px;top:514.65px;width:400px;height:18.7px;line-height:18.7px;text-align:center;font-size:12.7px;color:#fff;font-weight:bold;white-space:nowrap;">26.05.2025 09:00</div><div style="position:absolute;left:563.5px;top:514.65px;width:400px;height:18.7px;line-height:18.7px;text-align:center;font-size:12.7px;color:#fff;font-weight:bold;white-space:nowrap;">21.06.2025 18:00</div><div style="position:absolute;left:623px;top:514.95px;width:300px;height:18.1px;line-height:18.1px;text-align:right;font-size:12.1px;color:#fff;font-weight:bold;white-space:nowrap;">100</div><div style="position:absolute;left:39.5px;top:516.1999999999999px;width:30px;height:17.2px;line-height:17.2px;text-align:center;font-size:11.2px;color:#222;white-space:nowrap;">18</div><div style="position:absolute;left:66px;top:535px;width:10px;height:22px;background:#173863;"></div><div style="position:absolute;left:76px;top:535px;width:10px;height:22px;background:#1c4b80;"></div><div style="position:absolute;left:86px;top:535px;width:10px;height:22px;background:#2259a0;"></div><div style="position:absolute;left:96px;top:535px;width:10px;height:22px;background:#2769b8;"></div><div style="position:absolute;left:106px;top:535px;width:822px;height:22px;background:#fff;border-bottom:1px dashed #c4c4c8;"></div><div style="position:absolute;left:221px;top:535px;width:1px;height:22px;border-left:1px dashed #c4c4c8;"></div><div style="position:absolute;left:583px;top:535px;width:1px;height:22px;border-left:1px dashed #c4c4c8;"></div><div style="position:absolute;left:700px;top:535px;width:1px;height:22px;border-left:1px dashed #c4c4c8;"></div><div style="position:absolute;left:827px;top:535px;width:1px;height:22px;border-left:1px dashed #c4c4c8;"></div><div style="position:absolute;left:927px;top:535px;width:1px;height:22px;border-left:1px dashed #c4c4c8;"></div><div style="position:absolute;left:108px;top:540px;width:12px;height:12px;border:1.5px solid #111;border-radius:1px;"></div><div style="position:absolute;left:130px;top:536.9px;height:18.2px;line-height:18.2px;font-size:12.2px;color:#2a2a2a;white-space:nowrap;">02.03.01</div><div style="position:absolute;left:226px;top:536.6px;height:18.8px;line-height:18.8px;font-size:12.8px;color:#2a2a2a;white-space:nowrap;">Устройство наружных монолитных стен 1-го этажа</div><div style="position:absolute;left:441.5px;top:536.65px;width:400px;height:18.7px;line-height:18.7px;text-align:center;font-size:12.7px;color:#2a2a2a;white-space:nowrap;">26.05.2025 09:00</div><div style="position:absolute;left:563.5px;top:536.65px;width:400px;height:18.7px;line-height:18.7px;text-align:center;font-size:12.7px;color:#2a2a2a;white-space:nowrap;">27.05.2025 18:00</div><div style="position:absolute;left:623px;top:536.65px;width:300px;height:18.7px;line-height:18.7px;text-align:right;font-size:12.7px;color:#2a2a2a;white-space:nowrap;">49</div><div style="position:absolute;left:39.5px;top:538.1999999999999px;width:30px;height:17.2px;line-height:17.2px;text-align:center;font-size:11.2px;color:#222;white-space:nowrap;">19</div><div style="position:absolute;left:66px;top:557px;width:10px;height:22px;background:#173863;"></div><div style="position:absolute;left:76px;top:557px;width:10px;height:22px;background:#1c4b80;"></div><div style="position:absolute;left:86px;top:557px;width:10px;height:22px;background:#2259a0;"></div><div style="position:absolute;left:96px;top:557px;width:10px;height:22px;background:#2769b8;"></div><div style="position:absolute;left:106px;top:557px;width:822px;height:22px;background:#fff;border-bottom:1px dashed #c4c4c8;"></div><div style="position:absolute;left:221px;top:557px;width:1px;height:22px;border-left:1px dashed #c4c4c8;"></div><div style="position:absolute;left:583px;top:557px;width:1px;height:22px;border-left:1px dashed #c4c4c8;"></div><div style="position:absolute;left:700px;top:557px;width:1px;height:22px;border-left:1px dashed #c4c4c8;"></div><div style="position:absolute;left:827px;top:557px;width:1px;height:22px;border-left:1px dashed #c4c4c8;"></div><div style="position:absolute;left:927px;top:557px;width:1px;height:22px;border-left:1px dashed #c4c4c8;"></div><div style="position:absolute;left:108px;top:562px;width:12px;height:12px;border:1.5px solid #111;border-radius:1px;"></div><div style="position:absolute;left:130px;top:558.9px;height:18.2px;line-height:18.2px;font-size:12.2px;color:#2a2a2a;white-space:nowrap;">02.03.02</div><div style="position:absolute;left:226px;top:558.6px;height:18.8px;line-height:18.8px;font-size:12.8px;color:#2a2a2a;white-space:nowrap;">Устройство внутренних монолитных стен 1-го этажа</div><div style="position:absolute;left:441.5px;top:558.65px;width:400px;height:18.7px;line-height:18.7px;text-align:center;font-size:12.7px;color:#2a2a2a;white-space:nowrap;">26.05.2025 09:00</div><div style="position:absolute;left:563.5px;top:558.65px;width:400px;height:18.7px;line-height:18.7px;text-align:center;font-size:12.7px;color:#2a2a2a;white-space:nowrap;">27.05.2025 18:00</div><div style="position:absolute;left:623px;top:558.65px;width:300px;height:18.7px;line-height:18.7px;text-align:right;font-size:12.7px;color:#2a2a2a;white-space:nowrap;">32</div><div style="position:absolute;left:39.5px;top:560.1999999999999px;width:30px;height:17.2px;line-height:17.2px;text-align:center;font-size:11.2px;color:#222;white-space:nowrap;">20</div><div style="position:absolute;left:66px;top:579px;width:10px;height:22px;background:#173863;"></div><div style="position:absolute;left:76px;top:579px;width:10px;height:22px;background:#1c4b80;"></div><div style="position:absolute;left:86px;top:579px;width:10px;height:22px;background:#2259a0;"></div><div style="position:absolute;left:96px;top:579px;width:10px;height:22px;background:#2769b8;"></div><div style="position:absolute;left:106px;top:579px;width:822px;height:22px;background:#fff;border-bottom:1px dashed #c4c4c8;"></div><div style="position:absolute;left:221px;top:579px;width:1px;height:22px;border-left:1px dashed #c4c4c8;"></div><div style="position:absolute;left:583px;top:579px;width:1px;height:22px;border-left:1px dashed #c4c4c8;"></div><div style="position:absolute;left:700px;top:579px;width:1px;height:22px;border-left:1px dashed #c4c4c8;"></div><div style="position:absolute;left:827px;top:579px;width:1px;height:22px;border-left:1px dashed #c4c4c8;"></div><div style="position:absolute;left:927px;top:579px;width:1px;height:22px;border-left:1px dashed #c4c4c8;"></div><div style="position:absolute;left:108px;top:584px;width:12px;height:12px;border:1.5px solid #111;border-radius:1px;"></div><div style="position:absolute;left:130px;top:580.9px;height:18.2px;line-height:18.2px;font-size:12.2px;color:#2a2a2a;white-space:nowrap;">02.03.03</div><div style="position:absolute;left:226px;top:580.6px;height:18.8px;line-height:18.8px;font-size:12.8px;color:#2a2a2a;white-space:nowrap;">Устройство монолитной лестницы 1-го этажа</div><div style="position:absolute;left:441.5px;top:580.65px;width:400px;height:18.7px;line-height:18.7px;text-align:center;font-size:12.7px;color:#2a2a2a;white-space:nowrap;">28.05.2025 09:00</div><div style="position:absolute;left:563.5px;top:580.65px;width:400px;height:18.7px;line-height:18.7px;text-align:center;font-size:12.7px;color:#2a2a2a;white-space:nowrap;">02.06.2025 18:00</div><div style="position:absolute;left:623px;top:580.65px;width:300px;height:18.7px;line-height:18.7px;text-align:right;font-size:12.7px;color:#2a2a2a;white-space:nowrap;">73</div><div style="position:absolute;left:39.5px;top:582.1999999999999px;width:30px;height:17.2px;line-height:17.2px;text-align:center;font-size:11.2px;color:#222;white-space:nowrap;">21</div><div style="position:absolute;left:66px;top:601px;width:10px;height:22px;background:#173863;"></div><div style="position:absolute;left:76px;top:601px;width:10px;height:22px;background:#1c4b80;"></div><div style="position:absolute;left:86px;top:601px;width:10px;height:22px;background:#2259a0;"></div><div style="position:absolute;left:96px;top:601px;width:10px;height:22px;background:#2769b8;"></div><div style="position:absolute;left:106px;top:601px;width:822px;height:22px;background:#fff;border-bottom:1px dashed #c4c4c8;"></div><div style="position:absolute;left:221px;top:601px;width:1px;height:22px;border-left:1px dashed #c4c4c8;"></div><div style="position:absolute;left:583px;top:601px;width:1px;height:22px;border-left:1px dashed #c4c4c8;"></div><div style="position:absolute;left:700px;top:601px;width:1px;height:22px;border-left:1px dashed #c4c4c8;"></div><div style="position:absolute;left:827px;top:601px;width:1px;height:22px;border-left:1px dashed #c4c4c8;"></div><div style="position:absolute;left:927px;top:601px;width:1px;height:22px;border-left:1px dashed #c4c4c8;"></div><div style="position:absolute;left:108px;top:606px;width:12px;height:12px;border:1.5px solid #111;border-radius:1px;"></div><div style="position:absolute;left:130px;top:602.9px;height:18.2px;line-height:18.2px;font-size:12.2px;color:#2a2a2a;white-space:nowrap;">02.03.04</div><div style="position:absolute;left:226px;top:602.6px;height:18.8px;line-height:18.8px;font-size:12.8px;color:#2a2a2a;white-space:nowrap;">Устройство монолитного перекрытия 1-го этажа</div><div style="position:absolute;left:441.5px;top:602.65px;width:400px;height:18.7px;line-height:18.7px;text-align:center;font-size:12.7px;color:#2a2a2a;white-space:nowrap;">03.06.2025 09:00</div><div style="position:absolute;left:563.5px;top:602.65px;width:400px;height:18.7px;line-height:18.7px;text-align:center;font-size:12.7px;color:#2a2a2a;white-space:nowrap;">05.06.2025 18:00</div><div style="position:absolute;left:623px;top:602.65px;width:300px;height:18.7px;line-height:18.7px;text-align:right;font-size:12.7px;color:#2a2a2a;white-space:nowrap;">21</div><div style="position:absolute;left:39.5px;top:604.1999999999999px;width:30px;height:17.2px;line-height:17.2px;text-align:center;font-size:11.2px;color:#222;white-space:nowrap;">22</div><div style="position:absolute;left:941px;top:88px;width:976px;height:533px;background:#fff;"></div><div style="position:absolute;left:941px;top:87px;width:976px;height:1px;background:#c6c6cc;"></div><div style="position:absolute;left:941px;top:103px;width:973px;height:2px;background:#d2d2d8;"></div><div style="position:absolute;left:941px;top:120px;width:973px;height:2px;background:#d2d2d8;"></div><div style="position:absolute;left:941px;top:137px;width:973px;height:2px;background:#d2d2d8;"></div><div style="position:absolute;left:1230.5px;top:86.9px;width:400px;height:18.2px;line-height:18.2px;text-align:center;font-size:12.2px;color:#222;white-space:nowrap;">2025</div><div style="position:absolute;left:1016px;top:104px;width:1.5px;height:17px;background:#d2d2d8;"></div><div style="position:absolute;left:941px;top:104px;width:973px;height:17px;overflow:hidden;"><div style="position:absolute;left:74.94285714285706px;top:0;width:200px;text-align:center;line-height:17px;font-size:12.5px;color:#222;">май</div></div><div style="position:absolute;left:1219px;top:104px;width:1.5px;height:17px;background:#d2d2d8;"></div><div style="position:absolute;left:941px;top:104px;width:973px;height:17px;overflow:hidden;"><div style="position:absolute;left:274.5px;top:0;width:200px;text-align:center;line-height:17px;font-size:12.5px;color:#222;">июнь</div></div><div style="position:absolute;left:1415px;top:104px;width:1.5px;height:17px;background:#d2d2d8;"></div><div style="position:absolute;left:941px;top:104px;width:973px;height:17px;overflow:hidden;"><div style="position:absolute;left:474.05714285714294px;top:0;width:200px;text-align:center;line-height:17px;font-size:12.5px;color:#222;">июль</div></div><div style="position:absolute;left:1618px;top:104px;width:1.5px;height:17px;background:#d2d2d8;"></div><div style="position:absolute;left:941px;top:104px;width:973px;height:17px;overflow:hidden;"><div style="position:absolute;left:676.8857142857141px;top:0;width:200px;text-align:center;line-height:17px;font-size:12.5px;color:#222;">август</div></div><div style="position:absolute;left:1821px;top:104px;width:1.5px;height:17px;background:#d2d2d8;"></div><div style="position:absolute;left:941px;top:104px;width:973px;height:17px;overflow:hidden;"><div style="position:absolute;left:876.4428571428571px;top:0;width:200px;text-align:center;line-height:17px;font-size:12.5px;color:#222;">сентябрь</div></div><div style="position:absolute;left:951px;top:121px;width:1.5px;height:17px;background:#d2d2d8;"></div><div style="position:absolute;left:953.5px;top:120.7px;width:40px;height:17.6px;line-height:17.6px;text-align:center;font-size:11.6px;color:#222;white-space:nowrap;">17</div><div style="position:absolute;left:996px;top:121px;width:1.5px;height:17px;background:#d2d2d8;"></div><div style="position:absolute;left:999.3px;top:120.7px;width:40px;height:17.6px;line-height:17.6px;text-align:center;font-size:11.6px;color:#222;white-space:nowrap;">18</div><div style="position:absolute;left:1042px;top:121px;width:1.5px;height:17px;background:#d2d2d8;"></div><div style="position:absolute;left:1045.1000000000001px;top:120.7px;width:40px;height:17.6px;line-height:17.6px;text-align:center;font-size:11.6px;color:#222;white-space:nowrap;">19</div><div style="position:absolute;left:1088px;top:121px;width:1.5px;height:17px;background:#d2d2d8;"></div><div style="position:absolute;left:1090.9px;top:120.7px;width:40px;height:17.6px;line-height:17.6px;text-align:center;font-size:11.6px;color:#222;white-space:nowrap;">20</div><div style="position:absolute;left:1134px;top:121px;width:1.5px;height:17px;background:#d2d2d8;"></div><div style="position:absolute;left:1136.7px;top:120.7px;width:40px;height:17.6px;line-height:17.6px;text-align:center;font-size:11.6px;color:#222;white-space:nowrap;">21</div><div style="position:absolute;left:1180px;top:121px;width:1.5px;height:17px;background:#d2d2d8;"></div><div style="position:absolute;left:1182.5px;top:120.7px;width:40px;height:17.6px;line-height:17.6px;text-align:center;font-size:11.6px;color:#222;white-space:nowrap;">22</div><div style="position:absolute;left:1225px;top:121px;width:1.5px;height:17px;background:#d2d2d8;"></div><div style="position:absolute;left:1228.3000000000002px;top:120.7px;width:40px;height:17.6px;line-height:17.6px;text-align:center;font-size:11.6px;color:#222;white-space:nowrap;">23</div><div style="position:absolute;left:1271px;top:121px;width:1.5px;height:17px;background:#d2d2d8;"></div><div style="position:absolute;left:1274.1px;top:120.7px;width:40px;height:17.6px;line-height:17.6px;text-align:center;font-size:11.6px;color:#222;white-space:nowrap;">24</div><div style="position:absolute;left:1317px;top:121px;width:1.5px;height:17px;background:#d2d2d8;"></div><div style="position:absolute;left:1319.9px;top:120.7px;width:40px;height:17.6px;line-height:17.6px;text-align:center;font-size:11.6px;color:#222;white-space:nowrap;">25</div><div style="position:absolute;left:1363px;top:121px;width:1.5px;height:17px;background:#d2d2d8;"></div><div style="position:absolute;left:1365.7px;top:120.7px;width:40px;height:17.6px;line-height:17.6px;text-align:center;font-size:11.6px;color:#222;white-space:nowrap;">26</div><div style="position:absolute;left:1409px;top:121px;width:1.5px;height:17px;background:#d2d2d8;"></div><div style="position:absolute;left:1411.5px;top:120.7px;width:40px;height:17.6px;line-height:17.6px;text-align:center;font-size:11.6px;color:#222;white-space:nowrap;">27</div><div style="position:absolute;left:1454px;top:121px;width:1.5px;height:17px;background:#d2d2d8;"></div><div style="position:absolute;left:1457.3000000000002px;top:120.7px;width:40px;height:17.6px;line-height:17.6px;text-align:center;font-size:11.6px;color:#222;white-space:nowrap;">28</div><div style="position:absolute;left:1500px;top:121px;width:1.5px;height:17px;background:#d2d2d8;"></div><div style="position:absolute;left:1503.1px;top:120.7px;width:40px;height:17.6px;line-height:17.6px;text-align:center;font-size:11.6px;color:#222;white-space:nowrap;">29</div><div style="position:absolute;left:1546px;top:121px;width:1.5px;height:17px;background:#d2d2d8;"></div><div style="position:absolute;left:1548.9px;top:120.7px;width:40px;height:17.6px;line-height:17.6px;text-align:center;font-size:11.6px;color:#222;white-space:nowrap;">30</div><div style="position:absolute;left:1592px;top:121px;width:1.5px;height:17px;background:#d2d2d8;"></div><div style="position:absolute;left:1594.7px;top:120.7px;width:40px;height:17.6px;line-height:17.6px;text-align:center;font-size:11.6px;color:#222;white-space:nowrap;">31</div><div style="position:absolute;left:1638px;top:121px;width:1.5px;height:17px;background:#d2d2d8;"></div><div style="position:absolute;left:1640.5px;top:120.7px;width:40px;height:17.6px;line-height:17.6px;text-align:center;font-size:11.6px;color:#222;white-space:nowrap;">32</div><div style="position:absolute;left:1683px;top:121px;width:1.5px;height:17px;background:#d2d2d8;"></div><div style="position:absolute;left:1686.3000000000002px;top:120.7px;width:40px;height:17.6px;line-height:17.6px;text-align:center;font-size:11.6px;color:#222;white-space:nowrap;">33</div><div style="position:absolute;left:1729px;top:121px;width:1.5px;height:17px;background:#d2d2d8;"></div><div style="position:absolute;left:1732.1px;top:120.7px;width:40px;height:17.6px;line-height:17.6px;text-align:center;font-size:11.6px;color:#222;white-space:nowrap;">34</div><div style="position:absolute;left:1775px;top:121px;width:1.5px;height:17px;background:#d2d2d8;"></div><div style="position:absolute;left:1777.9px;top:120.7px;width:40px;height:17.6px;line-height:17.6px;text-align:center;font-size:11.6px;color:#222;white-space:nowrap;">35</div><div style="position:absolute;left:1821px;top:121px;width:1.5px;height:17px;background:#d2d2d8;"></div><div style="position:absolute;left:1823.7px;top:120.7px;width:40px;height:17.6px;line-height:17.6px;text-align:center;font-size:11.6px;color:#222;white-space:nowrap;">36</div><div style="position:absolute;left:1867px;top:121px;width:1.5px;height:17px;background:#d2d2d8;"></div><div style="position:absolute;left:1869.5px;top:120.7px;width:40px;height:17.6px;line-height:17.6px;text-align:center;font-size:11.6px;color:#222;white-space:nowrap;">37</div><div style="position:absolute;left:1912px;top:121px;width:1.5px;height:17px;background:#d2d2d8;"></div><div style="position:absolute;left:941px;top:160px;width:973px;height:1px;background-image:linear-gradient(90deg,#cfcfd3 0,#cfcfd3 1.5px,transparent 1.5px);background-size:6px 1px;"></div><div style="position:absolute;left:941px;top:182px;width:973px;height:1px;background-image:linear-gradient(90deg,#cfcfd3 0,#cfcfd3 1.5px,transparent 1.5px);background-size:6px 1px;"></div><div style="position:absolute;left:941px;top:204px;width:973px;height:1px;background-image:linear-gradient(90deg,#cfcfd3 0,#cfcfd3 1.5px,transparent 1.5px);background-size:6px 1px;"></div><div style="position:absolute;left:941px;top:226px;width:973px;height:1px;background-image:linear-gradient(90deg,#cfcfd3 0,#cfcfd3 1.5px,transparent 1.5px);background-size:6px 1px;"></div><div style="position:absolute;left:941px;top:227px;width:973px;height:22px;background:#fefbcc;"></div><div style="position:absolute;left:941px;top:248px;width:973px;height:1px;background-image:linear-gradient(90deg,#cfcfd3 0,#cfcfd3 1.5px,transparent 1.5px);background-size:6px 1px;"></div><div style="position:absolute;left:941px;top:270px;width:973px;height:1px;background-image:linear-gradient(90deg,#cfcfd3 0,#cfcfd3 1.5px,transparent 1.5px);background-size:6px 1px;"></div><div style="position:absolute;left:941px;top:292px;width:973px;height:1px;background-image:linear-gradient(90deg,#cfcfd3 0,#cfcfd3 1.5px,transparent 1.5px);background-size:6px 1px;"></div><div style="position:absolute;left:941px;top:314px;width:973px;height:1px;background-image:linear-gradient(90deg,#cfcfd3 0,#cfcfd3 1.5px,transparent 1.5px);background-size:6px 1px;"></div><div style="position:absolute;left:941px;top:336px;width:973px;height:1px;background-image:linear-gradient(90deg,#cfcfd3 0,#cfcfd3 1.5px,transparent 1.5px);background-size:6px 1px;"></div><div style="position:absolute;left:941px;top:358px;width:973px;height:1px;background-image:linear-gradient(90deg,#cfcfd3 0,#cfcfd3 1.5px,transparent 1.5px);background-size:6px 1px;"></div><div style="position:absolute;left:941px;top:380px;width:973px;height:1px;background-image:linear-gradient(90deg,#cfcfd3 0,#cfcfd3 1.5px,transparent 1.5px);background-size:6px 1px;"></div><div style="position:absolute;left:941px;top:402px;width:973px;height:1px;background-image:linear-gradient(90deg,#cfcfd3 0,#cfcfd3 1.5px,transparent 1.5px);background-size:6px 1px;"></div><div style="position:absolute;left:941px;top:424px;width:973px;height:1px;background-image:linear-gradient(90deg,#cfcfd3 0,#cfcfd3 1.5px,transparent 1.5px);background-size:6px 1px;"></div><div style="position:absolute;left:941px;top:446px;width:973px;height:1px;background-image:linear-gradient(90deg,#cfcfd3 0,#cfcfd3 1.5px,transparent 1.5px);background-size:6px 1px;"></div><div style="position:absolute;left:941px;top:468px;width:973px;height:1px;background-image:linear-gradient(90deg,#cfcfd3 0,#cfcfd3 1.5px,transparent 1.5px);background-size:6px 1px;"></div><div style="position:absolute;left:941px;top:490px;width:973px;height:1px;background-image:linear-gradient(90deg,#cfcfd3 0,#cfcfd3 1.5px,transparent 1.5px);background-size:6px 1px;"></div><div style="position:absolute;left:941px;top:512px;width:973px;height:1px;background-image:linear-gradient(90deg,#cfcfd3 0,#cfcfd3 1.5px,transparent 1.5px);background-size:6px 1px;"></div><div style="position:absolute;left:941px;top:534px;width:973px;height:1px;background-image:linear-gradient(90deg,#cfcfd3 0,#cfcfd3 1.5px,transparent 1.5px);background-size:6px 1px;"></div><div style="position:absolute;left:941px;top:556px;width:973px;height:1px;background-image:linear-gradient(90deg,#cfcfd3 0,#cfcfd3 1.5px,transparent 1.5px);background-size:6px 1px;"></div><div style="position:absolute;left:941px;top:578px;width:973px;height:1px;background-image:linear-gradient(90deg,#cfcfd3 0,#cfcfd3 1.5px,transparent 1.5px);background-size:6px 1px;"></div><div style="position:absolute;left:941px;top:600px;width:973px;height:1px;background-image:linear-gradient(90deg,#cfcfd3 0,#cfcfd3 1.5px,transparent 1.5px);background-size:6px 1px;"></div><div style="position:absolute;left:941px;top:622px;width:973px;height:1px;background-image:linear-gradient(90deg,#cfcfd3 0,#cfcfd3 1.5px,transparent 1.5px);background-size:6px 1px;"></div><div style="position:absolute;left:1914px;top:139px;width:3px;height:482px;background:#f0f0f2;"></div><div style="position:absolute;left:1914px;top:139px;width:3px;height:55px;background:#d8d8dc;"></div><svg style="position:absolute;left:0;top:0;" width="1917" height="907" viewBox="0 0 1917 907"><defs><clipPath id="gc"><rect x="941" y="139" width="973" height="482"/></clipPath></defs><g clip-path="url(#gc)"><path d="M1005.7 142H1916V146H1010.2L1005.7 149.5Z" fill="#a8a8a8"/><path d="M1005.7 151H1916V155H1010.2L1005.7 158.5Z" fill="#000"/><path d="M1005.7 164H1916V168H1010.2L1005.7 171.5Z" fill="#a8a8a8"/><path d="M1005.7 173H1916V177H1010.2L1005.7 180.5Z" fill="#000"/><path d="M1005.7 186H1047V193.5L1042.5 190H1010.2L1005.7 193.5Z" fill="#a8a8a8"/><path d="M1005.7 195H1538.8V202.5L1534.3 199H1010.2L1005.7 202.5Z" fill="#000"/><text x="1558.5" y="198.5" font-size="12.4" fill="#555" font-weight="bold" letter-spacing="-0.3" font-family="Liberation Sans, sans-serif">Земляные работы</text><rect x="1005.8" y="210.5" width="15.700000000000045" height="4.5" fill="#d0d0d0" stroke="#9a9a9a" stroke-width="1.2"/><rect x="1004" y="218" width="5.5" height="7" fill="#000"/><text x="1041.7" y="220.5" font-size="12.9" fill="#5e5e5e"  font-family="Liberation Sans, sans-serif">Вертикальная планировка территории</text><rect x="1025.2" y="232.5" width="9.299999999999955" height="4.5" fill="#d0d0d0" stroke="#9a9a9a" stroke-width="1.2"/><rect x="1505.8" y="240" width="32.8" height="7" fill="#26c795"/><rect x="1505.8" y="240" width="4.2" height="7" fill="#000"/><rect x="1534.6" y="240" width="4" height="7" fill="#000"/><text x="1558.5" y="242.5" font-size="12.9" fill="#5e5e5e"  font-family="Liberation Sans, sans-serif">Устройство котлована</text><rect x="1038.2" y="254.5" width="9.099999999999909" height="4.5" fill="#d0d0d0" stroke="#9a9a9a" stroke-width="1.2"/><rect x="1037.7" y="262" width="3.5" height="7" fill="#000"/><rect x="1041.2" y="262" width="3" height="7" fill="#1473e6"/><rect x="1044.2" y="262" width="3.6" height="7" fill="#26c795"/><path d="M1043.5 268 L1046.5 263" stroke="#fff" stroke-width="1"/><text x="1068" y="264.5" font-size="12.9" fill="#5e5e5e"  font-family="Liberation Sans, sans-serif">Устройство песчаного основания</text><path d="M1051.2 274H1623.5V281.5L1619.0 278H1055.7L1051.2 281.5Z" fill="#a8a8a8"/><path d="M1051.2 283H1656.5V290.5L1652.0 287H1055.7L1051.2 290.5Z" fill="#000"/><text x="1676.7" y="286.5" font-size="12.4" fill="#555" font-weight="bold" letter-spacing="-0.3" font-family="Liberation Sans, sans-serif">Общестроительные работы</text><path d="M1051.2 296H1132.5V303.5L1128.0 300H1055.7L1051.2 303.5Z" fill="#a8a8a8"/><path d="M1051.2 305H1132.5V312.5L1128.0 309H1055.7L1051.2 312.5Z" fill="#000"/><text x="1152.5" y="308.5" font-size="12.4" fill="#555" font-weight="bold" letter-spacing="-0.3" font-family="Liberation Sans, sans-serif">Фундамент</text><rect x="1051.6964285714284" y="320.5" width="7.996428571428623" height="4.5" fill="#d0d0d0" stroke="#9a9a9a" stroke-width="1.2"/><rect x="1051.1964285714284" y="328" width="4.948035714285743" height="7" fill="#1473e6"/><rect x="1056.144464285714" y="328" width="4.04839285714288" height="7" fill="#26c795"/><text x="1080.192857142857" y="330.5" font-size="12.9" fill="#5e5e5e"  font-family="Liberation Sans, sans-serif">Устройство буронабивных свай захватка 1</text><rect x="1064.7821428571428" y="342.5" width="7.996428571428623" height="4.5" fill="#d0d0d0" stroke="#9a9a9a" stroke-width="1.2"/><rect x="1064.2821428571428" y="350" width="2.0691785714285835" height="7" fill="#1473e6"/><rect x="1066.3513214285715" y="350" width="6.92725000000004" height="7" fill="#26c795"/><text x="1093.2785714285715" y="352.5" font-size="12.9" fill="#5e5e5e"  font-family="Liberation Sans, sans-serif">Устройство буронабивных свай захватка 2</text><rect x="1077.867857142857" y="364.5" width="7.996428571428623" height="4.5" fill="#d0d0d0" stroke="#9a9a9a" stroke-width="1.2"/><rect x="1077.367857142857" y="372" width="7.826892857142902" height="7" fill="#1473e6"/><rect x="1085.1947499999999" y="372" width="1.169535714285721" height="7" fill="#26c795"/><text x="1106.3642857142856" y="374.5" font-size="12.9" fill="#5e5e5e"  font-family="Liberation Sans, sans-serif">Устройство буронабивных свай захватка 3</text><rect x="1090.9535714285714" y="386.5" width="7.996428571428623" height="4.5" fill="#d0d0d0" stroke="#9a9a9a" stroke-width="1.2"/><rect x="1090.4535714285714" y="394" width="5.48782142857146" height="7" fill="#1473e6"/><rect x="1095.9413928571428" y="394" width="3.5086071428571635" height="7" fill="#26c795"/><text x="1119.45" y="396.5" font-size="12.9" fill="#5e5e5e"  font-family="Liberation Sans, sans-serif">Устройство буронабивных свай захватка 4</text><rect x="1104.0392857142856" y="408.5" width="27.625" height="4.5" fill="#d0d0d0" stroke="#9a9a9a" stroke-width="1.2"/><rect x="1103.5392857142856" y="416" width="3.435" height="7" fill="#1473e6"/><rect x="1106.9742857142855" y="416" width="25.19" height="7" fill="#26c795"/><text x="1152.1642857142856" y="418.5" font-size="12.9" fill="#5e5e5e"  font-family="Liberation Sans, sans-serif">Устройство фундаментной плиты</text><rect x="1136.7535714285714" y="452.5" width="7.996428571428623" height="4.5" fill="#d0d0d0" stroke="#9a9a9a" stroke-width="1.2"/><rect x="1136.2535714285714" y="460" width="3.9584285714285943" height="7" fill="#1473e6"/><rect x="1140.212" y="460" width="5.03800000000003" height="7" fill="#26c795"/><text x="1165.25" y="462.5" font-size="12.9" fill="#5e5e5e"  font-family="Liberation Sans, sans-serif">Устройство монолитных стен цокольного этажа</text><rect x="1149.8392857142858" y="474.5" width="27.625" height="4.5" fill="#d0d0d0" stroke="#9a9a9a" stroke-width="1.2"/><rect x="1149.3392857142858" y="482" width="6.87" height="7" fill="#1473e6"/><rect x="1156.2092857142857" y="482" width="21.755" height="7" fill="#26c795"/><text x="1197.9642857142858" y="484.5" font-size="12.9" fill="#5e5e5e"  font-family="Liberation Sans, sans-serif">Устройство монолитного перекрытия цокольного этажа</text><rect x="1195.6392857142857" y="496.5" width="7.996428571428623" height="4.5" fill="#d0d0d0" stroke="#9a9a9a" stroke-width="1.2"/><rect x="1195.1392857142857" y="504" width="7.736928571428616" height="7" fill="#1473e6"/><rect x="1202.8762142857142" y="504" width="1.2595000000000074" height="7" fill="#26c795"/><text x="1225" y="506.5" font-size="12.9" fill="#5e5e5e"  font-family="Liberation Sans, sans-serif">Устройство монолитной входной лестницы</text><rect x="1182.5535714285713" y="540.5" width="7.996428571428623" height="4.5" fill="#d0d0d0" stroke="#9a9a9a" stroke-width="1.2"/><rect x="1182.0535714285713" y="548" width="4.4082500000000255" height="7" fill="#1473e6"/><rect x="1186.4618214285713" y="548" width="4.588178571428598" height="7" fill="#26c795"/><text x="1211.05" y="550.5" font-size="12.9" fill="#5e5e5e"  font-family="Liberation Sans, sans-serif">Устройство наружных монолитных стен 1-го этажа</text><rect x="1182.5535714285713" y="562.5" width="7.996428571428623" height="4.5" fill="#d0d0d0" stroke="#9a9a9a" stroke-width="1.2"/><rect x="1182.0535714285713" y="570" width="2.8788571428571594" height="7" fill="#1473e6"/><rect x="1184.9324285714285" y="570" width="6.1175714285714635" height="7" fill="#26c795"/><text x="1211.05" y="572.5" font-size="12.9" fill="#5e5e5e"  font-family="Liberation Sans, sans-serif">Устройство внутренних монолитных стен 1-го этажа</text><rect x="1195.6392857142857" y="584.5" width="34.1678571428572" height="4.5" fill="#d0d0d0" stroke="#9a9a9a" stroke-width="1.2"/><rect x="1195.1392857142857" y="592" width="25.672535714285758" height="7" fill="#1473e6"/><rect x="1220.8118214285714" y="592" width="9.495321428571446" height="7" fill="#26c795"/><text x="1250.307142857143" y="594.5" font-size="12.9" fill="#5e5e5e"  font-family="Liberation Sans, sans-serif">Устройство монолитной лестницы 1-го этажа</text><rect x="1234.8964285714285" y="606.5" width="14.539285714285825" height="4.5" fill="#d0d0d0" stroke="#9a9a9a" stroke-width="1.2"/><rect x="1234.3964285714285" y="614" width="3.263250000000023" height="7" fill="#1473e6"/><rect x="1237.6596785714285" y="614" width="12.276035714285802" height="7" fill="#26c795"/><text x="1269.9357142857143" y="616.5" font-size="12.9" fill="#5e5e5e"  font-family="Liberation Sans, sans-serif">Устройство монолитного перекрытия 1-го этажа</text><path d="M1136.7 428H1204.2V435.5L1199.7 432H1141.2L1136.7 435.5Z" fill="#a8a8a8"/><path d="M1136.7 437H1204.2V444.5L1199.7 441H1141.2L1136.7 444.5Z" fill="#000"/><text x="1224" y="440.5" font-size="12.4" fill="#555" font-weight="bold" letter-spacing="-0.3" font-family="Liberation Sans, sans-serif">Монолитные работы подземной части</text><path d="M1182 516H1361.7V523.5L1357.2 520H1186.5L1182 523.5Z" fill="#a8a8a8"/><path d="M1182 525H1355.4V532.5L1350.9 529H1186.5L1182 532.5Z" fill="#000"/><text x="1381.7" y="528.5" font-size="12.4" fill="#555" font-weight="bold" letter-spacing="-0.3" font-family="Liberation Sans, sans-serif">Монолитные работы надземной части</text><path d="M1047.8 265.5V271.5H1037.4V331.5H1043" fill="none" stroke="#000" stroke-width="1.6"/><path d="M1051.2 331.5L1043.7 327.5V335.5Z" fill="#000"/><path d="M1060.192857142857 331.5 L1061.192857142857 331.5 L1061.192857142857 337 L1050.7821428571428 337 L1050.7821428571428 353.5 L1064.2821428571428 353.5" fill="none" stroke="#000" stroke-width="1.6"/><path d="M1064.2821428571428 353.5L1056.7821428571428 349.5V357.5Z" fill="#000"/><path d="M1073.2785714285715 353.5 L1074.2785714285715 353.5 L1074.2785714285715 359 L1063.867857142857 359 L1063.867857142857 375.5 L1077.367857142857 375.5" fill="none" stroke="#000" stroke-width="1.6"/><path d="M1077.367857142857 375.5L1069.867857142857 371.5V379.5Z" fill="#000"/><path d="M1086.3642857142856 375.5 L1087.3642857142856 375.5 L1087.3642857142856 381 L1076.9535714285714 381 L1076.9535714285714 397.5 L1090.4535714285714 397.5" fill="none" stroke="#000" stroke-width="1.6"/><path d="M1090.4535714285714 397.5L1082.9535714285714 393.5V401.5Z" fill="#000"/><path d="M1099.45 397.5 L1100.45 397.5 L1100.45 403 L1090.0392857142856 403 L1090.0392857142856 419.5 L1103.5392857142856 419.5" fill="none" stroke="#000" stroke-width="1.6"/><path d="M1103.5392857142856 419.5L1096.0392857142856 415.5V423.5Z" fill="#000"/><path d="M1133 419.5 L1133 426.5 L1122.5 426.5 L1122.5 463.5 L1136.7 463.5" fill="none" stroke="#000" stroke-width="1.6"/><path d="M1136.7 463.5L1129.2 459.5V467.5Z" fill="#000"/><path d="M1145.25 463.5 L1146.25 463.5 L1146.25 469 L1135.8392857142858 469 L1135.8392857142858 485.5 L1149.3392857142858 485.5" fill="none" stroke="#000" stroke-width="1.6"/><path d="M1149.3392857142858 485.5L1141.8392857142858 481.5V489.5Z" fill="#000"/><path d="M1177.9642857142858 485.5 L1177.9642857142858 492.5 L1168.2 492.5 L1168.2 551.5 L1182 551.5" fill="none" stroke="#000" stroke-width="1.6"/><path d="M1182 551.5L1174.5 547.5V555.5Z" fill="#000"/><path d="M1181.5 534 L1181.5 507.5 L1195.2 507.5" fill="none" stroke="#000" stroke-width="1.6"/><path d="M1195.2 507.5L1187.7 503.5V511.5Z" fill="#000"/><path d="M1205 507.5H1218M1218 503.5V511.5" stroke="#555" stroke-width="1.6"/><path d="M1217 507.5L1209.5 503.5V511.5Z" fill="#000"/><path d="M1181.5 534 L1181.5 538 L1191.4 538 L1191.4 558 L1168 558 L1168 573.5 L1182 573.5" fill="none" stroke="#000" stroke-width="1.6"/><path d="M1182 573.5L1174.5 569.5V577.5Z" fill="#000"/><path d="M1191.05 573.5 L1191.05 580.5 L1181 580.5 L1181 595.5 L1195 595.5" fill="none" stroke="#000" stroke-width="1.6"/><path d="M1195 595.5L1187.5 591.5V599.5Z" fill="#000"/><path d="M1230.307142857143 595.5 L1230.307142857143 602.5 L1221 602.5 L1221 617.5 L1234.3 617.5" fill="none" stroke="#000" stroke-width="1.6"/><path d="M1234.3 617.5L1226.8 613.5V621.5Z" fill="#000"/><path d="M1506.5 139V621" stroke="#ef2b4f" stroke-width="2" stroke-dasharray="5 3"/><path d="M1502 139H1511L1506.5 144.5Z" fill="#ef2b4f"/><text transform="translate(1511.5 141) rotate(90)" font-size="11.5" fill="#8a8a8a" font-family="Liberation Sans, sans-serif">Дата актуализации</text></g></svg><div style="position:absolute;left:44px;top:619px;width:884px;height:1px;background:#fff;"></div><div style="position:absolute;left:941px;top:619px;width:976px;height:1px;background:#fff;"></div><div style="position:absolute;left:44px;top:620px;width:1873px;height:5.5px;background:#b9b9c0;"></div><div style="position:absolute;left:44px;top:626px;width:1873px;height:281px;background:#fff;"></div><div style="position:absolute;left:10.0px;top:636.9px;width:300px;height:23.2px;line-height:23.2px;text-align:center;font-size:17.2px;color:#2b7bd6;white-space:nowrap;">Карточка работы</div><div style="position:absolute;left:229.0px;top:636.9px;width:300px;height:23.2px;line-height:23.2px;text-align:center;font-size:17.2px;color:#333;white-space:nowrap;">Связи работы</div><div style="position:absolute;left:460.0px;top:636.9px;width:300px;height:23.2px;line-height:23.2px;text-align:center;font-size:17.2px;color:#333;white-space:nowrap;">Связанные графики</div><div style="position:absolute;left:689.0px;top:636.9px;width:300px;height:23.2px;line-height:23.2px;text-align:center;font-size:17.2px;color:#333;white-space:nowrap;">Справочники</div><div style="position:absolute;left:936.0px;top:636.9px;width:300px;height:23.2px;line-height:23.2px;text-align:center;font-size:17.2px;color:#333;white-space:nowrap;">Суточное планирование</div><div style="position:absolute;left:1216.0px;top:636.9px;width:300px;height:23.2px;line-height:23.2px;text-align:center;font-size:17.2px;color:#333;white-space:nowrap;">Фото / Документация</div><div style="position:absolute;left:1485.0px;top:636.9px;width:300px;height:23.2px;line-height:23.2px;text-align:center;font-size:17.2px;color:#333;white-space:nowrap;">Запросы и поручения</div><div style="position:absolute;left:1695.0px;top:636.9px;width:300px;height:23.2px;line-height:23.2px;text-align:center;font-size:17.2px;color:#333;white-space:nowrap;">Табели</div><div style="position:absolute;left:44px;top:668px;width:232px;height:2.5px;background:#1f74d6;"></div><div style="position:absolute;left:60px;top:687.6px;height:19.8px;line-height:19.8px;font-size:13.8px;color:#111;font-weight:bold;white-space:nowrap;">Тип</div><div style="position:absolute;left:60px;top:718.4000000000001px;height:19.6px;line-height:19.6px;font-size:13.6px;color:#111;font-weight:bold;white-space:nowrap;">Шифр</div><div style="position:absolute;left:60px;top:747.1px;height:19.8px;line-height:19.8px;font-size:13.8px;color:#111;font-weight:bold;white-space:nowrap;">Статус</div><div style="position:absolute;left:120px;top:686px;width:162px;height:22px;border:1px solid #b8b8c0;border-radius:4px;background:#fff;"></div><div style="position:absolute;left:132px;top:686.0px;height:21px;line-height:21px;font-size:15px;color:#222;white-space:nowrap;">Работа</div><svg style="position:absolute;left:253px;top:694.5px;" width="12" height="7" viewBox="0 0 12 7"><path d="M0 0H11L5.5 6Z" fill="#555"/></svg><div style="position:absolute;left:120px;top:716px;width:162px;height:22px;border:1px solid #b8b8c0;border-radius:4px;background:#fff;"></div><div style="position:absolute;left:132px;top:716.5px;height:21px;line-height:21px;font-size:15px;color:#222;white-space:nowrap;">01.02</div><div style="position:absolute;left:120px;top:746px;width:162px;height:22px;border:1px solid #b8b8c0;border-radius:4px;background:#fff;"></div><div style="position:absolute;left:132px;top:746.0px;height:21px;line-height:21px;font-size:15px;color:#222;white-space:nowrap;">Не начата</div><svg style="position:absolute;left:253px;top:754.5px;" width="12" height="7" viewBox="0 0 12 7"><path d="M0 0H11L5.5 6Z" fill="#555"/></svg><div style="position:absolute;left:290px;top:686px;width:530px;height:50px;border:1px solid #b8b8c0;border-radius:4px;background:#fff;"></div><div style="position:absolute;left:302px;top:696.85px;height:24.3px;line-height:24.3px;font-size:18.3px;color:#111;font-weight:bold;white-space:nowrap;">Устройство котлована</div><div style="position:absolute;left:290.5px;top:745.55px;height:20.9px;line-height:20.9px;font-size:14.9px;color:#333;white-space:nowrap;">Сценарий</div><div style="position:absolute;left:363px;top:744px;width:457px;height:23px;background:#efeff2;border-radius:4px;"></div><div style="position:absolute;left:375.0px;top:745.5px;width:300px;height:20px;line-height:20px;text-align:center;font-size:14px;color:#333;white-space:nowrap;">Сценария нет</div><svg style="position:absolute;left:797px;top:746px;" width="19" height="19" viewBox="0 0 19 19"><g fill="none" stroke="#bbb" stroke-width="1.2"><path d="M9.5 1.5L12 3.5L15.5 3.5L15.8 7L18 9.5L15.8 12L15.5 15.5L12 15.5L9.5 17.5L7 15.5L3.5 15.5L3.2 12L1 9.5L3.2 7L3.5 3.5L7 3.5Z"/><path d="M6.5 7L9 9.5L6.5 12M10 7L12.5 9.5L10 12"/></g></svg><div style="position:absolute;left:828px;top:686px;width:146px;height:81px;border:1.5px solid #5b9be0;border-radius:5px;background:#fff;overflow:hidden;"><div style="position:absolute;left:0;top:0;width:146px;height:34px;background:#5b9be0;"></div></div><div style="position:absolute;left:860px;top:678px;width:8px;height:15px;background:#fff;border:1.5px solid #5b9be0;border-radius:3px;"></div><div style="position:absolute;left:933px;top:678px;width:8px;height:15px;background:#fff;border:1.5px solid #5b9be0;border-radius:3px;"></div><div style="position:absolute;left:830.5px;top:693.85px;width:140px;height:19.3px;line-height:19.3px;text-align:center;font-size:13.3px;color:#fff;white-space:nowrap;"><span style="text-decoration:underline;">PLAN-R: 7 дней</span></div><svg style="position:absolute;left:839px;top:726px;" width="20" height="20" viewBox="0 0 20 20"><g fill="none" stroke="#555" stroke-width="1.3" stroke-linecap="round" stroke-linejoin="round"><path d="M2.2 3.6L3.8 2L6.4 4.6L4.8 6.2Z"/><path d="M5.6 5.4L10.5 10.3"/><path d="M9 10.5L11 8.5L16.3 12.8C18 14.4 17.6 16.6 16.4 17.4C15.2 18.3 13.2 18.2 12 16.6Z"/></g></svg><div style="position:absolute;left:865px;top:724px;width:72px;height:22px;border:1px solid #b8b8c0;border-radius:4px;background:#fff;border-color:#c0c0c6;"></div><div style="position:absolute;left:866.0px;top:724.5px;width:70px;height:21px;line-height:21px;text-align:center;font-size:15px;color:#111;white-space:nowrap;">40</div><div style="position:absolute;left:945px;top:726.0px;height:19px;line-height:19px;font-size:13px;color:#222;white-space:nowrap;">ч.</div><div style="position:absolute;left:827.5px;top:747.55px;width:146px;height:18.9px;line-height:18.9px;text-align:center;font-size:12.9px;color:#222;white-space:nowrap;">Календарных: 5 дн.</div><div style="position:absolute;left:52px;top:776px;width:922px;height:24px;background:#23c693;border-radius:2px;"></div><div style="position:absolute;left:74px;top:777.35px;height:21.3px;line-height:21.3px;font-size:15.3px;color:#fff;white-space:nowrap;">14.07.2025 17:17</div><div style="position:absolute;left:466.5px;top:777.5px;width:100px;height:21px;line-height:21px;text-align:center;font-size:15px;color:#fff;white-space:nowrap;">0 %</div><div style="position:absolute;left:641px;top:777.35px;width:300px;height:21.3px;line-height:21.3px;text-align:right;font-size:15.3px;color:#fff;white-space:nowrap;">19.07.2025 17:17</div><div style="position:absolute;left:52px;top:815.5px;height:20px;line-height:20px;font-size:14px;color:#111;font-weight:bold;white-space:nowrap;">Ограничения</div><div style="position:absolute;left:205px;top:822px;width:768px;height:3.5px;background:#b6b6bc;"></div><div style="position:absolute;left:52px;top:842.75px;height:20.5px;line-height:20.5px;font-size:14.5px;color:#333;white-space:nowrap;">Начало</div><div style="position:absolute;left:119px;top:841px;width:149px;height:22px;border:1px solid #b8b8c0;border-radius:4px;background:#fff;"></div><svg style="position:absolute;left:238px;top:850.5px;" width="12" height="7" viewBox="0 0 12 7"><path d="M0 0H11L5.5 6Z" fill="#444"/></svg><div style="position:absolute;left:728px;top:842.7px;height:20.6px;line-height:20.6px;font-size:14.6px;color:#333;white-space:nowrap;">Окончание</div><div style="position:absolute;left:820px;top:841px;width:150px;height:22px;border:1px solid #b8b8c0;border-radius:4px;background:#fff;"></div><svg style="position:absolute;left:939px;top:850.5px;" width="12" height="7" viewBox="0 0 12 7"><path d="M0 0H11L5.5 6Z" fill="#444"/></svg><div style="position:absolute;left:52px;top:879px;width:40px;height:20px;background:#a6a6a6;border-radius:3px;box-shadow:0 1px 2px rgba(0,0,0,0.35);"></div><svg style="position:absolute;left:62px;top:882px;" width="20" height="14" viewBox="0 0 20 14"><path d="M9 2L4 7L9 12M15 2L10 7L15 12" fill="none" stroke="#fff" stroke-width="1.4"/></svg><div style="position:absolute;left:108.5px;top:879.55px;height:20.9px;line-height:20.9px;font-size:14.9px;color:#222;white-space:nowrap;">Начало как можно раньше</div><div style="position:absolute;left:717px;top:879.45px;height:21.1px;line-height:21.1px;font-size:15.1px;color:#222;white-space:nowrap;">Окончание как можно позже</div><div style="position:absolute;left:934px;top:879px;width:40px;height:20px;background:#a6a6a6;border-radius:3px;box-shadow:0 1px 2px rgba(0,0,0,0.35);"></div><svg style="position:absolute;left:944px;top:882px;" width="20" height="14" viewBox="0 0 20 14"><path d="M5 2L10 7L5 12M11 2L16 7L11 12" fill="none" stroke="#fff" stroke-width="1.4"/></svg><div style="position:absolute;left:982px;top:678px;width:1px;height:229px;background:#c4c4ca;"></div><div style="position:absolute;left:990.5px;top:697.05px;height:19.5px;line-height:19.5px;font-size:13.5px;color:#111;font-weight:bold;white-space:nowrap;">Атрибуты</div><div style="position:absolute;left:1081px;top:686px;width:831px;height:40px;border:1px solid #b8b8c0;border-radius:4px;background:#fff;"></div><div style="position:absolute;left:1093px;top:694.8px;height:21.4px;line-height:21.4px;font-size:15.4px;color:#888;white-space:nowrap;">Поиск</div><div style="position:absolute;left:990.5px;top:745.65px;height:20.7px;line-height:20.7px;font-size:14.7px;color:#222;white-space:nowrap;">Шифр</div><div style="position:absolute;left:1456.5px;top:745.5px;height:21px;line-height:21px;font-size:15px;color:#222;white-space:nowrap;">01.02</div><div style="position:absolute;left:987px;top:776px;width:930px;height:1px;background:#b8b8c0;"></div><div style="position:absolute;left:990.5px;top:787.65px;height:20.7px;line-height:20.7px;font-size:14.7px;color:#222;white-space:nowrap;">Наименование</div><div style="position:absolute;left:1456.5px;top:787.5px;height:21px;line-height:21px;font-size:15px;color:#222;white-space:nowrap;">Устройство котлована</div><div style="position:absolute;left:987px;top:818px;width:930px;height:1px;background:#b8b8c0;"></div><div style="position:absolute;left:990.5px;top:829.65px;height:20.7px;line-height:20.7px;font-size:14.7px;color:#222;white-space:nowrap;">Старт</div><div style="position:absolute;left:1456.5px;top:829.5px;height:21px;line-height:21px;font-size:15px;color:#222;white-space:nowrap;">14.07.2025 17:17</div><div style="position:absolute;left:987px;top:860px;width:930px;height:1px;background:#b8b8c0;"></div><div style="position:absolute;left:990.5px;top:871.65px;height:20.7px;line-height:20.7px;font-size:14.7px;color:#222;white-space:nowrap;">Финиш</div><div style="position:absolute;left:1456.5px;top:871.5px;height:21px;line-height:21px;font-size:15px;color:#222;white-space:nowrap;">19.07.2025 17:17</div><div style="position:absolute;left:987px;top:902px;width:930px;height:1px;background:#b8b8c0;"></div><svg style="position:absolute;left:0;top:0;" width="1917" height="907" viewBox="0 0 1917 907"><path d="M143.5 131V190" stroke="#000" stroke-width="3.3"/><path d="M143.5 121.5L149.7 133.5H137.3Z" fill="#000"/><ellipse cx="144.4" cy="207.6" rx="15.4" ry="17.6" fill="#fff" stroke="#000" stroke-width="3.6"/><text x="143.9" y="215.2" font-size="22.5" text-anchor="middle" fill="#000" font-family="Liberation Sans, sans-serif">1</text><path d="M410.5 131V190" stroke="#000" stroke-width="3.3"/><path d="M410.5 121.5L416.7 133.5H404.3Z" fill="#000"/><ellipse cx="410.8" cy="207.6" rx="15.4" ry="17.6" fill="#fff" stroke="#000" stroke-width="3.6"/><text x="410.3" y="215.2" font-size="22.5" text-anchor="middle" fill="#000" font-family="Liberation Sans, sans-serif">1</text><path d="M642.3 131V190" stroke="#000" stroke-width="3.3"/><path d="M642.3 121.5L648.5 133.5H636.0999999999999Z" fill="#000"/><ellipse cx="643.3" cy="207.6" rx="15.4" ry="17.6" fill="#fff" stroke="#000" stroke-width="3.6"/><text x="642.8" y="215.2" font-size="22.5" text-anchor="middle" fill="#000" font-family="Liberation Sans, sans-serif">1</text><path d="M763.6 131V190" stroke="#000" stroke-width="3.3"/><path d="M763.6 121.5L769.8000000000001 133.5H757.4Z" fill="#000"/><ellipse cx="765.2" cy="207.6" rx="15.4" ry="17.6" fill="#fff" stroke="#000" stroke-width="3.6"/><text x="764.7" y="215.2" font-size="22.5" text-anchor="middle" fill="#000" font-family="Liberation Sans, sans-serif">1</text><path d="M884.4 131V190" stroke="#000" stroke-width="3.3"/><path d="M884.4 121.5L890.6 133.5H878.1999999999999Z" fill="#000"/><ellipse cx="885.2" cy="207.6" rx="15.4" ry="17.6" fill="#fff" stroke="#000" stroke-width="3.6"/><text x="884.7" y="215.2" font-size="22.5" text-anchor="middle" fill="#000" font-family="Liberation Sans, sans-serif">1</text></svg></body></html>
